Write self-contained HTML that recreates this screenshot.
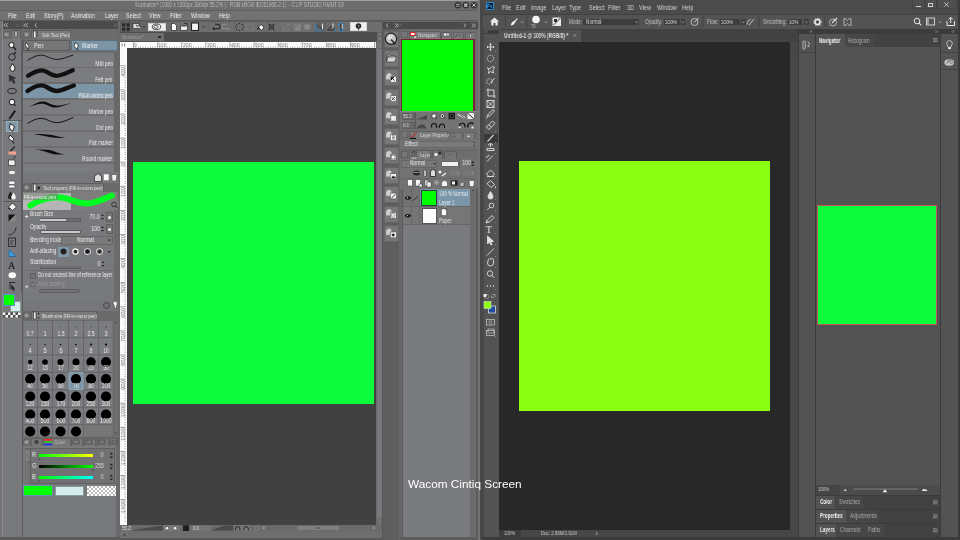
<!DOCTYPE html>
<html><head><meta charset="utf-8">
<style>
*{margin:0;padding:0;box-sizing:border-box}
html,body{width:960px;height:540px;overflow:hidden;background:#6a6a6a;font-family:"Liberation Sans",sans-serif}
.a{position:absolute}
.t{position:absolute;white-space:nowrap;line-height:1;transform-origin:0 50%;will-change:transform}
.n{transform:scaleX(.76)}
.r{transform-origin:100% 50%}
svg{position:absolute;overflow:visible}
#csp{position:absolute;left:0;top:0;width:480px;height:540px;background:#6b6b6b;overflow:hidden}
.cl{color:#e4e4e4;font-size:6px}
#ps{position:absolute;left:480px;top:0;width:480px;height:540px;background:#535353;overflow:hidden}
.pl{color:#d0d0d0;font-size:6px}
</style></head><body>
<div id="csp">
<div class="a" style="left:0;top:0;width:480px;height:1px;background:#a0a0a0"></div>
<div class="a" style="left:0;top:1px;width:480px;height:10px;background:#6d6d6d"></div>
<div class="t" style="left:134.8px;top:2.2px;font-size:6.9px;color:#bababa;transform:scaleX(.69)">Illustration* (1000 x 1000px 300dpi 55.2% ) : RGB:sRGB IEC61966-2.1)&nbsp; - CLIP STUDIO PAINT EX</div>
<svg style="position:absolute;left:0;top:0" width="480" height="12"><g fill="#262626" stroke="#5a5a5a" stroke-width=".6"><circle cx="457.9" cy="5.2" r="3.3"/><circle cx="465.8" cy="5.2" r="3.3"/><circle cx="474" cy="5.2" r="3.3"/></g>
<path d="M456 4.3h3.8M456 6.1h3.8" stroke="#d8d8d8" stroke-width=".8"/><rect x="464.3" y="3.6" width="3" height="3.2" fill="#ddd"/><rect x="465.3" y="4.8" width="1" height="1" fill="#222"/><path d="M472.3 3.5l3.4 3.4M475.7 3.5l-3.4 3.4" stroke="#e0e0e0" stroke-width="1"/></svg>
<div class="a" style="left:0;top:10px;width:480px;height:1px;background:#5e5e5e"></div>
<div class="a" style="left:0;top:11px;width:480px;height:10px;background:#727272"></div>
<div class="t cl n" style="left:8px;top:12px;font-size:7px;color:#f0f0f0;transform:scaleX(.76)">File</div>
<div class="t cl n" style="left:26px;top:12px;font-size:7px;color:#f0f0f0;transform:scaleX(.76)">Edit</div>
<div class="t cl n" style="left:43.5px;top:12px;font-size:7px;color:#f0f0f0;transform:scaleX(.76)">Story(P)</div>
<div class="t cl n" style="left:71px;top:12px;font-size:7px;color:#f0f0f0;transform:scaleX(.76)">Animation</div>
<div class="t cl n" style="left:105px;top:12px;font-size:7px;color:#f0f0f0;transform:scaleX(.76)">Layer</div>
<div class="t cl n" style="left:126px;top:12px;font-size:7px;color:#f0f0f0;transform:scaleX(.76)">Select</div>
<div class="t cl n" style="left:149px;top:12px;font-size:7px;color:#f0f0f0;transform:scaleX(.76)">View</div>
<div class="t cl n" style="left:170px;top:12px;font-size:7px;color:#f0f0f0;transform:scaleX(.76)">Filter</div>
<div class="t cl n" style="left:191px;top:12px;font-size:7px;color:#f0f0f0;transform:scaleX(.76)">Window</div>
<div class="t cl n" style="left:219px;top:12px;font-size:7px;color:#f0f0f0;transform:scaleX(.76)">Help</div>
<div class="a" style="left:0;top:20px;width:480px;height:1px;background:#5a5a5a"></div>
<div class="a" style="left:0px;top:21px;width:120px;height:519px;background:#6a6a6a;"></div>
<div class="a" style="left:0px;top:21px;width:2px;height:519px;background:#737373;"></div>
<div class="a" style="left:2px;top:21px;width:116px;height:8.3px;background:#4b4b4b;"></div>
<div class="a" style="left:22px;top:21px;width:0.8px;height:8.3px;background:#5a5a5a;"></div>
<svg style="left:0px;top:0px" width="120" height="40"><g fill="none" stroke="#c8c8c8" stroke-width="0.8"><path d="M5.8 23.2l-2 2 2 2M8 23.2l-2 2 2 2M25.8 23.2l-2 2 2 2M28 23.2l-2 2 2 2M36.5 23.2l-1.3 2 1.3 2"/></g><rect x="16" y="24" width="3" height="3" fill="#585858"/><rect x="114" y="23.5" width="3" height="3" fill="#5c5c5c"/></svg>
<div class="a" style="left:2px;top:29px;width:116px;height:10px;background:#6c6c6c;"></div>
<div class="a" style="left:3px;top:31px;width:7px;height:7px;background:#757575;border:1px solid #646464"></div>
<div class="a" style="left:11px;top:30px;width:10px;height:9px;background:#7a7a7a;border:1px solid #5e5e5e;border-bottom:none"></div>
<div class="a" style="left:23px;top:31px;width:7px;height:7px;background:#757575;border:1px solid #646464"></div>
<div class="a" style="left:31px;top:30px;width:40px;height:9px;background:#7a7a7a;border:1px solid #5e5e5e;border-bottom:none"></div>
<svg style="left:0px;top:0px" width="120" height="40"><g fill="#eee" stroke="#222" stroke-width="0.6"><rect x="15" y="31" width="2" height="6"/><rect x="33.5" y="31" width="2.5" height="7"/></g><g fill="#444"><rect x="37" y="31.5" width="1" height="1.5"/><rect x="37" y="34.5" width="1" height="1.5"/></g></svg>
<div class="t" style="left:42px;top:32.30px;font-size:6px;color:#e6e6e6;transform:scaleX(0.72);">Sub Tool [Pen]</div>
<div class="a" style="left:2px;top:39px;width:20px;height:498px;background:#78797c;"></div>
<div class="a" style="left:1.5px;top:21px;width:1px;height:516px;background:#8a8a8a;"></div>
<div class="a" style="left:3px;top:40px;width:19px;height:253px;background:#78797c;border-right:1px solid #5c5c5c"></div>
<div class="a" style="left:3px;top:120px;width:19px;height:1px;background:#5c5c5c;"></div>
<div class="a" style="left:3px;top:201px;width:19px;height:1px;background:#5c5c5c;"></div>
<div class="a" style="left:6px;top:121px;width:12px;height:11px;background:#7f97a6;border:1px solid #9ab0bd"></div>
<div class="a" style="left:22px;top:39px;width:1px;height:498px;background:#5c5c5c;"></div>
<svg style="left:0px;top:0px" width="24" height="300"><g stroke="#1a1a1a" stroke-width="1" fill="#f0f0f0">
<circle cx="11.5" cy="45" r="2.6"/><path d="M13.5 47l2.5 3" fill="none" stroke-width="1.3"/>
<circle cx="12" cy="57" r="3.3" fill="none" stroke="#2a2a2a"/><path d="M14 54l2-2" stroke-width="1.4"/>
<path d="M12.5 63.5c-1.5 2.5-2.5 4-2.5 5.3a2.5 2.5 0 0 0 5 0c0-1.3-1-2.8-2.5-5.3z"/>
<path d="M9 75l6.5 3-2.5 1 2 3.5-1.4.8-2-3.5-2 1.7z" fill="#333" stroke="#222" stroke-width=".6"/>
<ellipse cx="12" cy="91" rx="4.3" ry="2.5" fill="none" stroke="#2a2a2a"/>
<circle cx="12" cy="102" r="2.8"/><path d="M14 104l2 2" fill="none"/>
<path d="M14.5 110.5l-4.5 6.5-1 2.2 2-1.4 4.5-6.5z" fill="#222"/>
<path d="M10 123.5l4.5 3-2 5-3-3.5z" fill="#f5f5f5" stroke="#1a1a1a" stroke-width=".9"/>
<path d="M10 135l4 4-1.5 2.5-4-3z" fill="#f5f5f5" stroke="#1a1a1a" stroke-width=".9"/><path d="M12.5 141.5l1.5 2" stroke-width="1.2"/>
<path d="M15 146.5l-5 5" stroke="#222" stroke-width="1.2"/><rect x="8.5" y="151.5" width="7.5" height="3" fill="#f2a090" stroke="none"/>
<rect x="8.5" y="160" width="6.5" height="5.5" fill="#f0f0f0" stroke="#333" stroke-width=".7"/><path d="M13 159l3-3" stroke-width=".8"/>
<ellipse cx="12" cy="172.5" rx="3.5" ry="2.3" fill="#eee" stroke="#555" stroke-width=".7"/>
<rect x="8.5" y="181" width="6.5" height="3.5" rx="1.5" fill="#f4f4f4" stroke="#555" stroke-width=".7"/><rect x="8.5" y="185" width="6.5" height="3" rx="1.5" fill="#f4f4f4" stroke="#555" stroke-width=".7"/>
<path d="M10.5 191.5c-1.8 2.8-2.5 4.2-2.5 5.3a2.5 2.5 0 0 0 5 0c0-1.1-.7-2.5-2.5-5.3z" fill="#222" stroke="none"/><path d="M13.5 192.5c-1.5 2.5-2.3 3.8-2.3 4.8a2.3 2.3 0 0 0 4.6 0c0-1-.8-2.3-2.3-4.8z" fill="#f4f4f4" stroke="none"/>
<path d="M8.5 207l4-4 4 4-4 3.5z" fill="#f4f4f4" stroke="#222" stroke-width=".8"/><path d="M8 208l2 1" stroke-width="1.2"/>
<rect x="8.5" y="214.5" width="7" height="7" fill="#888" stroke="none"/><path d="M8.5 214.5h7l-7 7z" fill="#111" stroke="none"/>
<path d="M8.5 235c4 0 7-3 7.5-7.5" fill="none" stroke="#222" stroke-width=".9"/>
<rect x="8.5" y="238" width="7" height="8.5" fill="none" stroke="#2a2a2a" stroke-width=".9"/><path d="M10 241h4M10 243h2v2" fill="none" stroke="#2a2a2a" stroke-width=".7"/>
<path d="M9 249.5v7h7z" fill="#3aa0e0" stroke="#1f5f90" stroke-width=".7"/>
</g>
<text x="8" y="269" font-family="Liberation Serif" font-size="10" fill="#111">A</text>
<ellipse cx="12.3" cy="275.3" rx="3.8" ry="3" fill="#fafafa"/>
<path d="M9 282.5h6.5M10 283v6" stroke="#222" stroke-width=".9"/><path d="M11 284.5l4 4-1.3.3 1 2-1 .5-1-2-1 1z" fill="#222"/></svg>
<div class="a" style="left:10px;top:301px;width:10.5px;height:10.5px;background:#d3ecec;border:1px solid #8a9a9a"></div>
<div class="a" style="left:3px;top:294px;width:11.5px;height:11.5px;background:#00ff00;border:1px solid #5f8fbf"></div>
<svg style="left:0px;top:0px" width="30" height="330"><rect x="3.0" y="312.5" width="2.5" height="2.5" fill="#f4f4f4"/><rect x="3.0" y="315.0" width="2.5" height="2.5" fill="#505050"/><rect x="5.5" y="312.5" width="2.5" height="2.5" fill="#505050"/><rect x="5.5" y="315.0" width="2.5" height="2.5" fill="#f4f4f4"/><rect x="8.0" y="312.5" width="2.5" height="2.5" fill="#f4f4f4"/><rect x="8.0" y="315.0" width="2.5" height="2.5" fill="#505050"/><rect x="10.5" y="312.5" width="2.5" height="2.5" fill="#505050"/><rect x="10.5" y="315.0" width="2.5" height="2.5" fill="#f4f4f4"/><rect x="13.0" y="312.5" width="2.5" height="2.5" fill="#f4f4f4"/><rect x="13.0" y="315.0" width="2.5" height="2.5" fill="#505050"/><rect x="15.5" y="312.5" width="2.5" height="2.5" fill="#505050"/><rect x="15.5" y="315.0" width="2.5" height="2.5" fill="#f4f4f4"/><rect x="18.0" y="312.5" width="2.5" height="2.5" fill="#f4f4f4"/><rect x="18.0" y="315.0" width="2.5" height="2.5" fill="#505050"/></svg>
<div class="a" style="left:23px;top:39px;width:95px;height:144px;background:#6e6e6e;"></div>
<div class="a" style="left:23px;top:40px;width:47px;height:11px;background:#777777;border:1px solid #5c5c5c;border-radius:1px"></div>
<div class="a" style="left:71px;top:40px;width:47px;height:11px;background:#7b95a6;border:1px solid #5c6e7a;border-radius:1px"></div>
<svg style="left:0px;top:0px" width="120" height="60"><g stroke="#1a1a1a" stroke-width=".7" fill="#f2f2f2"><path d="M26 42l3 4.5-.8 2.8-2.8-4z"/><path d="M28 49.5l1.3 1.3" fill="none"/><path d="M75 42.5l3.5 2.5-1.5 4-3-2.5z"/><path d="M77 49l1 1.5" fill="none"/></g></svg>
<div class="t" style="left:34px;top:42.65px;font-size:6.5px;color:#e8e8e8;transform:scaleX(0.8);">Pen</div>
<div class="t" style="left:82px;top:42.65px;font-size:6.5px;color:#eef2f5;transform:scaleX(0.8);">Marker</div>
<div class="a" style="left:113px;top:52px;width:5px;height:120px;background:#686868;"></div>
<div class="a" style="left:23px;top:53px;width:90.5px;height:14px;background:#7b7c7f;"></div>
<div class="t r" style="right:367.50px;top:61.25px;font-size:6.5px;color:#ececec;transform:scaleX(0.73);">Milli pen</div>
<div class="a" style="left:23px;top:68px;width:90.5px;height:14px;background:#7b7c7f;"></div>
<div class="t r" style="right:367.50px;top:77.25px;font-size:6.5px;color:#ececec;transform:scaleX(0.73);">Felt pen</div>
<div class="a" style="left:23px;top:84px;width:90.5px;height:14px;background:#7c96a8;"></div>
<div class="a" style="left:79px;top:92.5px;width:33.5px;height:6px;background:rgba(200,200,200,.25);"></div>
<div class="t r" style="right:367.50px;top:92.65px;font-size:6.5px;color:#ececec;transform:scaleX(0.73);">Fill-in-mono pen</div>
<div class="a" style="left:23px;top:100px;width:90.5px;height:14px;background:#7b7c7f;"></div>
<div class="t r" style="right:367.50px;top:109.25px;font-size:6.5px;color:#ececec;transform:scaleX(0.73);">Marker pen</div>
<div class="a" style="left:23px;top:116px;width:90.5px;height:14px;background:#7b7c7f;"></div>
<div class="t r" style="right:367.50px;top:124.75px;font-size:6.5px;color:#ececec;transform:scaleX(0.73);">Dot pen</div>
<div class="a" style="left:23px;top:132px;width:90.5px;height:14px;background:#7b7c7f;"></div>
<div class="t r" style="right:367.50px;top:140.25px;font-size:6.5px;color:#ececec;transform:scaleX(0.73);">Flat marker</div>
<div class="a" style="left:23px;top:148px;width:90.5px;height:14px;background:#7b7c7f;"></div>
<div class="t r" style="right:367.50px;top:156.25px;font-size:6.5px;color:#ececec;transform:scaleX(0.73);">Round marker</div>
<div class="a" style="left:23px;top:164px;width:90.5px;height:8px;background:#7b7c7f;"></div>
<svg style="left:0px;top:0px" width="120" height="170"><g fill="none" stroke="#111" stroke-linecap="round">
<path d="M27.7 60.2C33 57 37 55 41.6 55.1S51 59.5 56.7 59.5 68 56.5 73 55.1" stroke-width=".9"/>
<path d="M28 75.8C33 72.5 37 70.5 41.6 70.3S51 75.8 56.7 75.8 68 72 72.8 70.2" stroke-width="4.2"/>
<path d="M27.5 91C32.5 87.5 37 85.5 41.6 85.4S51 91 56.7 91 68.5 87 73.8 85.5" stroke-width="4.4"/>

<path d="M27.7 123.3C33 120 37 118.3 41.6 118.3S51 122.7 56.7 122.7 68 119.5 73 117.6" stroke-width="1"/>
</g>
<defs><filter id="bl" x="-10%" y="-50%" width="120%" height="200%"><feGaussianBlur stdDeviation=".35"/></filter></defs>
<path filter="url(#bl)" d="M29.5 106.6C35 104 38 101.8 42.6 101.5S51 105.2 56.4 105.6 67 103.6 71.3 103.2C67 104 62 106.9 56.4 107.5S47 103.9 42.6 103.7 34 105.6 29.5 106.6Z" fill="#111"/>
<path filter="url(#bl)" d="M33.5 134.2C40 133.8 45 134.3 49.5 134.7S60 137.6 65.6 137.8C60 138.2 55 138 49.5 137.1S40 134.6 33.5 134.2Z" fill="#111"/>
<path filter="url(#bl)" d="M34.6 149.5C41 149.3 46 149.6 49.5 149.9S58 153.4 64.4 154.3C58 154.9 53 154.2 49.5 152.9S41 150.1 34.6 149.5Z" fill="#111"/></svg>
<div class="a" style="left:23px;top:172px;width:95px;height:11px;background:#76777a;"></div>
<svg style="left:0px;top:0px" width="120" height="190"><g stroke="#222" stroke-width=".7" fill="#eee">
<path d="M94.5 176.5l3.5-3 3.5 3v5h-7z" fill="#ddd"/><rect x="103.5" y="174" width="5.5" height="6.5" fill="#fafafa" stroke="#888"/><path d="M111.5 174.5h5.5l-.8 6.5h-4z" fill="#f0f0f0" stroke="#555"/>
</g></svg>
<div class="a" style="left:23px;top:183px;width:95px;height:9px;background:#6a6a6a;"></div>
<div class="a" style="left:23px;top:184px;width:7px;height:7px;background:#757575;border:1px solid #646464"></div>
<div class="a" style="left:31px;top:183px;width:72.5px;height:9px;background:#7a7a7a;border:1px solid #5e5e5e;border-bottom:none"></div>
<svg style="left:0px;top:0px" width="120" height="200"><rect x="33.5" y="184" width="2.5" height="7" fill="#eee" stroke="#222" stroke-width=".6"/><circle cx="38.7" cy="188" r="1.4" fill="#222"/></svg>
<div class="t" style="left:42.5px;top:185.30px;font-size:6px;color:#e6e6e6;transform:scaleX(0.72);">Tool property [Fill-in-mono pen]</div>
<div class="a" style="left:23px;top:192px;width:95px;height:18px;background:#7d7d7d;"></div>
<div class="a" style="left:23px;top:193px;width:48px;height:16.5px;background:#b5b5b5;"></div>
<svg style="left:0px;top:0px" width="120" height="215"><path d="M30.5 205.5C38 200 50 196.5 61 197.5C70 198.5 78 204 88 203.5C97 203 105 198.5 112 195.5" fill="none" stroke="#00ff21" stroke-width="6" stroke-linecap="round"/>
<circle cx="114" cy="204.5" r="2.3" fill="none" stroke="#222" stroke-width=".8"/><path d="M115.6 206.2l2 2" stroke="#222" stroke-width="1"/></svg>
<div class="a" style="left:23px;top:193px;width:34.5px;height:6.5px;background:rgba(120,130,120,.55);"></div>
<div class="t" style="left:23.5px;top:193.50px;font-size:6px;color:#f4f4f4;transform:scaleX(0.74);">Fill-in-mono pen</div>
<div class="a" style="left:23px;top:210px;width:95px;height:90px;background:#78797c;"></div>
<div class="a" style="left:113.5px;top:210px;width:4.5px;height:90px;background:#6b6b6b;"></div>
<svg style="left:0px;top:0px" width="120" height="300"><path d="M25 216.5h3.5M26.75 214.75v3.5" stroke="#eee" stroke-width=".8"/></svg>
<div class="t" style="left:29.5px;top:211.15px;font-size:6.5px;color:#ececec;transform:scaleX(0.74);">Brush Size</div>
<div class="a" style="left:39.5px;top:218px;width:41px;height:3.5px;background:#6e6e6e;border:1px solid #5a5a5a;border-radius:1px"></div>
<div class="a" style="left:40px;top:218.5px;width:26px;height:2.5px;background:#c8c8c8;"></div>
<div class="t r" style="right:380.50px;top:213.75px;font-size:6.5px;color:#ececec;transform:scaleX(0.8);">70.0</div>
<svg style="left:0px;top:0px" width="120" height="300"><g fill="#222"><path d="M101 216l1.5-1.8 1.5 1.8z"/><path d="M101 218l1.5 1.8 1.5-1.8z"/><path d="M101 228l1.5-1.8 1.5 1.8z"/><path d="M101 230l1.5 1.8 1.5-1.8z"/><path d="M101.5 263l1.5-1.8 1.5 1.8z"/><path d="M101.5 265l1.5 1.8 1.5-1.8z"/></g></svg>
<div class="a" style="left:106px;top:212px;width:6.5px;height:9.5px;background:#747474;border:1px solid #5f5f5f"></div>
<div class="a" style="left:107.8px;top:215.5px;width:3px;height:3px;background:#eee;border-radius:50%"></div>
<div class="t" style="left:29.5px;top:223.75px;font-size:6.5px;color:#ececec;transform:scaleX(0.74);">Opacity</div>
<div class="a" style="left:39.5px;top:230px;width:41px;height:3.5px;background:#c8c8c8;border:1px solid #5a5a5a;border-radius:1px"></div>
<div class="t r" style="right:380.00px;top:225.75px;font-size:6.5px;color:#ececec;transform:scaleX(0.8);">100</div>
<div class="a" style="left:106px;top:224px;width:6.5px;height:9.5px;background:#747474;border:1px solid #5f5f5f"></div>
<div class="a" style="left:107.8px;top:227.5px;width:3px;height:3px;background:#eee;border-radius:50%"></div>
<div class="t" style="left:29.5px;top:236.95px;font-size:6.5px;color:#ececec;transform:scaleX(0.74);">Blending mode</div>
<div class="a" style="left:61px;top:236px;width:51.5px;height:8.5px;background:#7a7a7a;border:1px solid #666"></div>
<div class="t" style="left:76.5px;top:236.95px;font-size:6.5px;color:#ececec;transform:scaleX(0.8);">Normal</div>
<svg style="left:0px;top:0px" width="120" height="300"><path d="M107.8 239.5h3l-1.5 1.8z" fill="#222"/><path d="M107.8 251h3l-1.5 1.8z" fill="#222"/></svg>
<div class="t" style="left:29.5px;top:248.25px;font-size:6.5px;color:#ececec;transform:scaleX(0.74);">Anti-aliasing</div>
<div class="a" style="left:57.5px;top:247px;width:11.5px;height:9.5px;background:#7f98a9;"></div>
<svg style="left:0px;top:0px" width="120" height="300"><circle cx="63.5" cy="251.6" r="3" fill="#222"/>
<circle cx="75.5" cy="251.6" r="3.3" fill="#eee"/><circle cx="75.5" cy="251.6" r="1.9" fill="#222"/>
<circle cx="87.5" cy="251.6" r="3.3" fill="#eee"/><circle cx="87.5" cy="251.6" r="2.5" fill="#333"/><circle cx="87.5" cy="251.6" r="1.4" fill="#111"/>
<circle cx="99.5" cy="251.6" r="3.3" fill="#eee"/><circle cx="99.5" cy="251.6" r="2.5" fill="#555"/><circle cx="99.5" cy="251.6" r="1.2" fill="#111"/></svg>
<div class="t" style="left:29.5px;top:258.55px;font-size:6.5px;color:#ececec;transform:scaleX(0.74);">Stabilization</div>
<div class="a" style="left:39.5px;top:265.5px;width:41px;height:3px;background:#6e6e6e;border:1px solid #5a5a5a;border-top:none;border-radius:1px"></div>
<div class="t r" style="right:379.50px;top:260.75px;font-size:6.5px;color:#ececec;transform:scaleX(0.8);">0</div>
<div class="a" style="left:26px;top:270px;width:88px;height:1px;background:#6c6c6c;"></div>
<div class="a" style="left:30px;top:273px;width:5.5px;height:5.5px;background:#727272;border:1px solid #5e5e5e"></div>
<div class="t" style="left:37.5px;top:271.95px;font-size:6.5px;color:#ececec;transform:scaleX(0.7);">Do not exceed line of reference layer</div>
<div class="a" style="left:30px;top:282px;width:5px;height:5px;background:#757575;border:1px solid #666"></div>
<div class="t" style="left:37.5px;top:281.25px;font-size:6.5px;color:#9a9a9a;transform:scaleX(0.74);">Area scaling</div>
<svg style="left:0px;top:0px" width="120" height="300"><path d="M31 284.5l1.3 1.5 2.5-3" fill="none" stroke="#9a9a9a" stroke-width=".7"/><path d="M25 286.8h3.5M26.75 285v3.5" stroke="#ddd" stroke-width=".8"/></svg>
<div class="a" style="left:39px;top:288.5px;width:41px;height:4px;background:#737373;border:1px solid #5e5e5e;border-radius:2px"></div>
<div class="a" style="left:23px;top:300px;width:95px;height:11px;background:#76777a;"></div>
<svg style="left:0px;top:0px" width="120" height="320"><circle cx="106.5" cy="305.5" r="2.8" fill="none" stroke="#333" stroke-width="1.2" stroke-dasharray="1 .8"/><path d="M113 302c2-1.5 4-.5 4.5 1.5l-1 3v2h-2v-2l-1.5-3z" fill="#eee" stroke="#333" stroke-width=".6"/></svg>
<div class="a" style="left:23px;top:311px;width:95px;height:9px;background:#6a6a6a;"></div>
<div class="a" style="left:23px;top:312px;width:7px;height:7px;background:#757575;border:1px solid #646464"></div>
<div class="a" style="left:31px;top:311px;width:65.5px;height:9px;background:#7a7a7a;border:1px solid #5e5e5e;border-bottom:none"></div>
<svg style="left:0px;top:0px" width="120" height="330"><rect x="33.5" y="312" width="2.5" height="7" fill="#eee" stroke="#222" stroke-width=".6"/><circle cx="38.7" cy="313.5" r=".8" fill="#222"/><circle cx="38.7" cy="318" r=".8" fill="#222"/></svg>
<div class="t" style="left:42px;top:312.60px;font-size:6px;color:#e6e6e6;transform:scaleX(0.72);">Brush size [Fill-in-mono pen]</div>
<div class="a" style="left:23px;top:320px;width:95px;height:117px;background:#666666;"></div>
<div class="a" style="left:114px;top:320px;width:4px;height:117px;background:#6e6e6e;"></div>
<svg style="left:0px;top:0px" width="120" height="440"><path d="M114.8 323l1.2-1.5 1.2 1.5z" fill="#444"/><path d="M114.8 432.5l1.2 1.5 1.2-1.5z" fill="#444"/></svg>
<svg style="left:0px;top:0px" width="120" height="440"><rect x="23.5" y="320.8" width="13.5" height="16.3" fill="#7b7c7f"/><circle cx="30.2" cy="327.0" r="0.25" fill="#000"/><rect x="38.0" y="320.8" width="14.0" height="16.3" fill="#7b7c7f"/><circle cx="45.0" cy="327.0" r="0.30" fill="#000"/><rect x="53.0" y="320.8" width="15.0" height="16.3" fill="#7b7c7f"/><circle cx="60.5" cy="327.0" r="0.35" fill="#000"/><rect x="69.0" y="320.8" width="14.0" height="16.3" fill="#7b7c7f"/><circle cx="76.0" cy="327.0" r="0.40" fill="#000"/><rect x="84.0" y="320.8" width="14.1" height="16.3" fill="#7b7c7f"/><circle cx="91.0" cy="327.0" r="0.45" fill="#000"/><rect x="99.1" y="320.8" width="13.8" height="16.3" fill="#7b7c7f"/><circle cx="106.0" cy="327.0" r="0.50" fill="#000"/><rect x="23.5" y="338.1" width="13.5" height="16.4" fill="#7b7c7f"/><circle cx="30.2" cy="344.5" r="0.50" fill="#000"/><rect x="38.0" y="338.1" width="14.0" height="16.4" fill="#7b7c7f"/><circle cx="45.0" cy="344.5" r="0.65" fill="#000"/><rect x="53.0" y="338.1" width="15.0" height="16.4" fill="#7b7c7f"/><circle cx="60.5" cy="344.5" r="0.75" fill="#000"/><rect x="69.0" y="338.1" width="14.0" height="16.4" fill="#7b7c7f"/><circle cx="76.0" cy="344.5" r="0.85" fill="#000"/><rect x="84.0" y="338.1" width="14.1" height="16.4" fill="#7b7c7f"/><circle cx="91.0" cy="344.5" r="0.95" fill="#000"/><rect x="99.1" y="338.1" width="13.8" height="16.4" fill="#7b7c7f"/><circle cx="106.0" cy="344.5" r="1.10" fill="#000"/><rect x="23.5" y="355.5" width="13.5" height="16.4" fill="#7b7c7f"/><circle cx="30.2" cy="362.0" r="2.15" fill="#000"/><rect x="38.0" y="355.5" width="14.0" height="16.4" fill="#7b7c7f"/><circle cx="45.0" cy="362.0" r="2.80" fill="#000"/><rect x="53.0" y="355.5" width="15.0" height="16.4" fill="#7b7c7f"/><circle cx="60.5" cy="362.0" r="3.10" fill="#000"/><rect x="69.0" y="355.5" width="14.0" height="16.4" fill="#7b7c7f"/><circle cx="76.0" cy="362.0" r="3.60" fill="#000"/><rect x="84.0" y="355.5" width="14.1" height="16.4" fill="#7b7c7f"/><circle cx="91.0" cy="362.0" r="4.75" fill="#000"/><rect x="99.1" y="355.5" width="13.8" height="16.4" fill="#7b7c7f"/><circle cx="106.0" cy="362.0" r="5.00" fill="#000"/><rect x="23.5" y="372.9" width="13.5" height="16.4" fill="#7b7c7f"/><circle cx="30.2" cy="379.0" r="5.10" fill="#000"/><rect x="38.0" y="372.9" width="14.0" height="16.4" fill="#7b7c7f"/><circle cx="45.0" cy="379.0" r="5.10" fill="#000"/><rect x="53.0" y="372.9" width="15.0" height="16.4" fill="#7b7c7f"/><circle cx="60.5" cy="379.0" r="5.10" fill="#000"/><rect x="69.0" y="372.9" width="14.0" height="16.4" fill="#7e97a8"/><circle cx="76.0" cy="379.0" r="5.10" fill="#000"/><rect x="84.0" y="372.9" width="14.1" height="16.4" fill="#7b7c7f"/><circle cx="91.0" cy="379.0" r="5.10" fill="#000"/><rect x="99.1" y="372.9" width="13.8" height="16.4" fill="#7b7c7f"/><circle cx="106.0" cy="379.0" r="5.10" fill="#000"/><rect x="23.5" y="390.3" width="13.5" height="16.4" fill="#7b7c7f"/><circle cx="30.2" cy="396.5" r="5.10" fill="#000"/><rect x="38.0" y="390.3" width="14.0" height="16.4" fill="#7b7c7f"/><circle cx="45.0" cy="396.5" r="5.10" fill="#000"/><rect x="53.0" y="390.3" width="15.0" height="16.4" fill="#7b7c7f"/><circle cx="60.5" cy="396.5" r="5.10" fill="#000"/><rect x="69.0" y="390.3" width="14.0" height="16.4" fill="#7b7c7f"/><circle cx="76.0" cy="396.5" r="5.10" fill="#000"/><rect x="84.0" y="390.3" width="14.1" height="16.4" fill="#7b7c7f"/><circle cx="91.0" cy="396.5" r="5.10" fill="#000"/><rect x="99.1" y="390.3" width="13.8" height="16.4" fill="#7b7c7f"/><circle cx="106.0" cy="396.5" r="5.10" fill="#000"/><rect x="23.5" y="407.7" width="13.5" height="16.4" fill="#7b7c7f"/><circle cx="30.2" cy="414.5" r="5.10" fill="#000"/><rect x="38.0" y="407.7" width="14.0" height="16.4" fill="#7b7c7f"/><circle cx="45.0" cy="414.5" r="5.10" fill="#000"/><rect x="53.0" y="407.7" width="15.0" height="16.4" fill="#7b7c7f"/><circle cx="60.5" cy="414.5" r="5.10" fill="#000"/><rect x="69.0" y="407.7" width="14.0" height="16.4" fill="#7b7c7f"/><circle cx="76.0" cy="414.5" r="5.10" fill="#000"/><rect x="84.0" y="407.7" width="14.1" height="16.4" fill="#7b7c7f"/><circle cx="91.0" cy="414.5" r="5.10" fill="#000"/><rect x="99.1" y="407.7" width="13.8" height="16.4" fill="#7b7c7f"/><circle cx="106.0" cy="414.5" r="5.10" fill="#000"/><rect x="23.5" y="425.1" width="13.5" height="11.4" fill="#7b7c7f"/><circle cx="30.2" cy="431.5" r="5.10" fill="#000"/><rect x="38.0" y="425.1" width="14.0" height="11.4" fill="#7b7c7f"/><circle cx="45.0" cy="431.5" r="5.10" fill="#000"/><rect x="53.0" y="425.1" width="15.0" height="11.4" fill="#7b7c7f"/><circle cx="60.5" cy="431.5" r="5.10" fill="#000"/><rect x="69.0" y="425.1" width="14.0" height="11.4" fill="#7b7c7f"/><circle cx="76.0" cy="431.5" r="5.10" fill="#000"/><rect x="83.9" y="425.1" width="29" height="11.4" fill="#777"/><rect x="68.9" y="372.8" width="14.2" height="16.6" fill="none" stroke="#9cb3c2" stroke-width=".8"/></svg>
<div class="t" style="left:0.25px;width:60px;text-align:center;top:330.75px;font-size:6.5px;color:#ededed;transform:scaleX(0.8);transform-origin:50% 50%;">0.7</div>
<div class="t" style="left:15.00px;width:60px;text-align:center;top:330.75px;font-size:6.5px;color:#ededed;transform:scaleX(0.8);transform-origin:50% 50%;">1</div>
<div class="t" style="left:30.50px;width:60px;text-align:center;top:330.75px;font-size:6.5px;color:#ededed;transform:scaleX(0.8);transform-origin:50% 50%;">1.5</div>
<div class="t" style="left:46.00px;width:60px;text-align:center;top:330.75px;font-size:6.5px;color:#ededed;transform:scaleX(0.8);transform-origin:50% 50%;">2</div>
<div class="t" style="left:61.05px;width:60px;text-align:center;top:330.75px;font-size:6.5px;color:#ededed;transform:scaleX(0.8);transform-origin:50% 50%;">2.5</div>
<div class="t" style="left:76.00px;width:60px;text-align:center;top:330.75px;font-size:6.5px;color:#ededed;transform:scaleX(0.8);transform-origin:50% 50%;">3</div>
<div class="t" style="left:0.25px;width:60px;text-align:center;top:348.15px;font-size:6.5px;color:#ededed;transform:scaleX(0.8);transform-origin:50% 50%;">4</div>
<div class="t" style="left:15.00px;width:60px;text-align:center;top:348.15px;font-size:6.5px;color:#ededed;transform:scaleX(0.8);transform-origin:50% 50%;">5</div>
<div class="t" style="left:30.50px;width:60px;text-align:center;top:348.15px;font-size:6.5px;color:#ededed;transform:scaleX(0.8);transform-origin:50% 50%;">6</div>
<div class="t" style="left:46.00px;width:60px;text-align:center;top:348.15px;font-size:6.5px;color:#ededed;transform:scaleX(0.8);transform-origin:50% 50%;">7</div>
<div class="t" style="left:61.05px;width:60px;text-align:center;top:348.15px;font-size:6.5px;color:#ededed;transform:scaleX(0.8);transform-origin:50% 50%;">8</div>
<div class="t" style="left:76.00px;width:60px;text-align:center;top:348.15px;font-size:6.5px;color:#ededed;transform:scaleX(0.8);transform-origin:50% 50%;">10</div>
<div class="t" style="left:0.25px;width:60px;text-align:center;top:365.25px;font-size:6.5px;color:#ededed;transform:scaleX(0.8);transform-origin:50% 50%;">12</div>
<div class="t" style="left:15.00px;width:60px;text-align:center;top:365.25px;font-size:6.5px;color:#ededed;transform:scaleX(0.8);transform-origin:50% 50%;">15</div>
<div class="t" style="left:30.50px;width:60px;text-align:center;top:365.25px;font-size:6.5px;color:#ededed;transform:scaleX(0.8);transform-origin:50% 50%;">17</div>
<div class="t" style="left:46.00px;width:60px;text-align:center;top:365.25px;font-size:6.5px;color:#ededed;transform:scaleX(0.8);transform-origin:50% 50%;">20</div>
<div class="t" style="left:61.05px;width:60px;text-align:center;top:365.25px;font-size:6.5px;color:#ededed;transform:scaleX(0.8);transform-origin:50% 50%;">25</div>
<div class="t" style="left:76.00px;width:60px;text-align:center;top:365.25px;font-size:6.5px;color:#ededed;transform:scaleX(0.8);transform-origin:50% 50%;">30</div>
<div class="t" style="left:0.25px;width:60px;text-align:center;top:382.75px;font-size:6.5px;color:#ededed;transform:scaleX(0.8);transform-origin:50% 50%;">40</div>
<div class="t" style="left:15.00px;width:60px;text-align:center;top:382.75px;font-size:6.5px;color:#ededed;transform:scaleX(0.8);transform-origin:50% 50%;">50</div>
<div class="t" style="left:30.50px;width:60px;text-align:center;top:382.75px;font-size:6.5px;color:#ededed;transform:scaleX(0.8);transform-origin:50% 50%;">60</div>
<div class="t" style="left:46.00px;width:60px;text-align:center;top:382.75px;font-size:6.5px;color:#ededed;transform:scaleX(0.8);transform-origin:50% 50%;">70</div>
<div class="t" style="left:61.05px;width:60px;text-align:center;top:382.75px;font-size:6.5px;color:#ededed;transform:scaleX(0.8);transform-origin:50% 50%;">80</div>
<div class="t" style="left:76.00px;width:60px;text-align:center;top:382.75px;font-size:6.5px;color:#ededed;transform:scaleX(0.8);transform-origin:50% 50%;">100</div>
<div class="t" style="left:0.25px;width:60px;text-align:center;top:400.55px;font-size:6.5px;color:#ededed;transform:scaleX(0.8);transform-origin:50% 50%;">120</div>
<div class="t" style="left:15.00px;width:60px;text-align:center;top:400.55px;font-size:6.5px;color:#ededed;transform:scaleX(0.8);transform-origin:50% 50%;">150</div>
<div class="t" style="left:30.50px;width:60px;text-align:center;top:400.55px;font-size:6.5px;color:#ededed;transform:scaleX(0.8);transform-origin:50% 50%;">170</div>
<div class="t" style="left:46.00px;width:60px;text-align:center;top:400.55px;font-size:6.5px;color:#ededed;transform:scaleX(0.8);transform-origin:50% 50%;">200</div>
<div class="t" style="left:61.05px;width:60px;text-align:center;top:400.55px;font-size:6.5px;color:#ededed;transform:scaleX(0.8);transform-origin:50% 50%;">250</div>
<div class="t" style="left:76.00px;width:60px;text-align:center;top:400.55px;font-size:6.5px;color:#ededed;transform:scaleX(0.8);transform-origin:50% 50%;">300</div>
<div class="t" style="left:0.25px;width:60px;text-align:center;top:417.75px;font-size:6.5px;color:#ededed;transform:scaleX(0.8);transform-origin:50% 50%;">400</div>
<div class="t" style="left:15.00px;width:60px;text-align:center;top:417.75px;font-size:6.5px;color:#ededed;transform:scaleX(0.8);transform-origin:50% 50%;">500</div>
<div class="t" style="left:30.50px;width:60px;text-align:center;top:417.75px;font-size:6.5px;color:#ededed;transform:scaleX(0.8);transform-origin:50% 50%;">600</div>
<div class="t" style="left:46.00px;width:60px;text-align:center;top:417.75px;font-size:6.5px;color:#ededed;transform:scaleX(0.8);transform-origin:50% 50%;">700</div>
<div class="t" style="left:61.05px;width:60px;text-align:center;top:417.75px;font-size:6.5px;color:#ededed;transform:scaleX(0.8);transform-origin:50% 50%;">800</div>
<div class="t" style="left:76.00px;width:60px;text-align:center;top:417.75px;font-size:6.5px;color:#ededed;transform:scaleX(0.8);transform-origin:50% 50%;">1000</div>
<div class="a" style="left:23px;top:437px;width:95px;height:9px;background:#6a6a6a;"></div>
<div class="a" style="left:23px;top:438.5px;width:7px;height:7px;background:#757575;border:1px solid #646464"></div>
<div class="a" style="left:31px;top:438px;width:11px;height:8px;background:#787878;border:1px solid #606060;border-bottom:none"></div>
<div class="a" style="left:43px;top:438px;width:27.5px;height:8px;background:#787878;border:1px solid #606060;border-bottom:none"></div>
<div class="a" style="left:71px;top:438px;width:11.5px;height:8px;background:#787878;border:1px solid #606060;border-bottom:none"></div>
<div class="a" style="left:84px;top:438px;width:12px;height:8px;background:#787878;border:1px solid #606060;border-bottom:none"></div>
<div class="a" style="left:97px;top:438px;width:12px;height:8px;background:#787878;border:1px solid #606060;border-bottom:none"></div>
<div class="a" style="left:110px;top:438px;width:8px;height:8px;background:#787878;border:1px solid #606060;border-bottom:none"></div>
<svg style="left:0px;top:0px" width="120" height="450"><rect x="44" y="439" width="8" height="1.6" fill="#ff2020"/><rect x="44" y="441.3" width="8" height="1.6" fill="#20d020"/><rect x="44" y="443.6" width="8" height="1.6" fill="#2020ff"/>
<circle cx="36.5" cy="442" r="2.2" fill="#444"/><rect x="73" y="440" width="6" height="4" fill="none" stroke="#444" stroke-width=".7"/><rect x="86" y="440" width="6" height="4" fill="none" stroke="#444" stroke-width=".7"/><rect x="99" y="440" width="6" height="4" fill="none" stroke="#444" stroke-width=".7"/><rect x="112" y="441" width="5" height="3" fill="none" stroke="#444" stroke-width=".7"/></svg>
<div class="t" style="left:54px;top:439.00px;font-size:6px;color:#bcbcbc;transform:scaleX(0.78);">Color</div>
<div class="a" style="left:23px;top:446px;width:95px;height:91px;background:#78797c;"></div>
<div class="a" style="left:116px;top:446px;width:2px;height:91px;background:#6a6a6a;"></div>
<div class="a" style="left:24.5px;top:448px;width:90px;height:36px;background:#727274;border:1px solid #606060"></div>
<div class="a" style="left:25px;top:449px;width:6px;height:35px;background:#6c6c6c;border-right:1px solid #5f5f5f"></div>
<div class="t" style="left:21px;top:453px;font-size:5px;color:#9a9a9a;transform:rotate(-90deg);transform-origin:50% 50%;width:14px;text-align:center">RGB</div>
<div class="t" style="left:21px;top:466px;font-size:5px;color:#8a8a8a;transform:rotate(-90deg);transform-origin:50% 50%;width:14px;text-align:center">HSV</div>
<div class="t" style="left:21px;top:477px;font-size:5px;color:#8a8a8a;transform:rotate(-90deg);transform-origin:50% 50%;width:14px;text-align:center">CMY</div>
<div class="t" style="left:32px;top:452.10px;font-size:6.8px;color:#e8e8e8;transform:scaleX(0.85);">R</div>
<div class="t" style="left:32px;top:462.90px;font-size:6.8px;color:#e8e8e8;transform:scaleX(0.85);">G</div>
<div class="t" style="left:32px;top:473.90px;font-size:6.8px;color:#e8e8e8;transform:scaleX(0.85);">B</div>
<div class="a" style="left:39px;top:453.6px;width:53.5px;height:3.5px;background:linear-gradient(90deg,#00ff00,#ffff00);"></div>
<div class="a" style="left:39px;top:464.6px;width:53.5px;height:3.5px;background:linear-gradient(90deg,#000,#00ff00);"></div>
<div class="a" style="left:39px;top:475.6px;width:53.5px;height:3.5px;background:linear-gradient(90deg,#00ff00,#00ffff);"></div>
<div class="t r" style="right:376.50px;top:452.25px;font-size:6.5px;color:#d8d8d8;transform:scaleX(0.8);">0</div>
<div class="t r" style="right:376.50px;top:463.05px;font-size:6.5px;color:#d8d8d8;transform:scaleX(0.8);">255</div>
<div class="t r" style="right:376.50px;top:474.05px;font-size:6.5px;color:#d8d8d8;transform:scaleX(0.8);">0</div>
<svg style="left:0px;top:0px" width="120" height="490"><g fill="#222"><path d="M109.5 454.5l1.8-2 1.8 2z"/><path d="M109.5 456.5l1.8 2 1.8-2z"/><path d="M109.5 465.5l1.8-2 1.8 2z"/><path d="M109.5 467.5l1.8 2 1.8-2z"/><path d="M109.5 476.5l1.8-2 1.8 2z"/><path d="M109.5 478.5l1.8 2 1.8-2z"/></g>
<g fill="#555"><path d="M37.5 460l1.7-2 1.7 2z"/><path d="M91 471l1.7-2 1.7 2z"/><path d="M37.5 482l1.7-2 1.7 2z"/></g></svg>
<div class="a" style="left:23.3px;top:485.3px;width:29.3px;height:11px;background:#00ff00;border:1.5px solid #6a8fb0"></div>
<div class="a" style="left:54.8px;top:485.6px;width:29.6px;height:10.4px;background:#d3ecec;border:1px solid #8c9a9a"></div>
<div class="a" style="left:87px;top:485.8px;width:28.5px;height:10px;background-color:#fff;background-image:linear-gradient(45deg,#bbb 25%,transparent 25%,transparent 75%,#bbb 75%),linear-gradient(45deg,#bbb 25%,transparent 25%,transparent 75%,#bbb 75%);background-size:4px 4px;background-position:0 0,2px 2px"></div>
<div class="a" style="left:0px;top:537px;width:120px;height:3px;background:#5c5c5c;"></div>
<svg style="left:0px;top:0px" width="40" height="450"><path d="M8 32.8v3.5M4.8 34.5l2-1.3v2.6zM28 32.8v3.5M24.8 34.5l2-1.3v2.6zM28 185.8v3.5M24.8 187.5l2-1.3v2.6zM28 313.8v3.5M24.8 315.5l2-1.3v2.6zM28 440.3v3.5M24.8 442l2-1.3v2.6z" stroke="#b0b0b0" stroke-width=".6" fill="#b0b0b0"/></svg>
<div class="a" style="left:120px;top:21px;width:262px;height:11px;background:#6e6e6e;"></div>
<div class="a" style="left:120px;top:21px;width:262px;height:1px;background:#5e5e5e;"></div>
<div class="a" style="left:120px;top:22px;width:12px;height:10px;background:#666666;border:1px solid #5a5a5a"></div>
<svg style="left:0px;top:0px" width="480" height="40"><g fill="#2a2a2a"><rect x="122" y="23.3" width="3.3" height="3.3"/><rect x="126.5" y="23.3" width="3.3" height="3.3"/><rect x="122" y="27.5" width="3.3" height="3.3"/><rect x="126.5" y="27.5" width="3.3" height="3.3"/></g></svg>
<div class="a" style="left:132px;top:22px;width:15px;height:10px;background:#646464;"></div>
<svg style="left:0px;top:0px" width="480" height="40"><rect x="133" y="23.5" width="6" height="5" fill="#ddd" stroke="#333" stroke-width=".7"/><path d="M136 25l3 4 2-2z" fill="#fff" stroke="#222" stroke-width=".6"/><path d="M142.5 26.3h3l-1.5 1.8z" fill="#333"/></svg>
<div class="a" style="left:147.5px;top:22.5px;width:18px;height:8.5px;background:#f2f2f2;border:1px solid #cfcfcf"></div>
<svg style="left:0px;top:0px" width="480" height="40"><ellipse cx="156.5" cy="26.8" rx="4.3" ry="2.8" fill="none" stroke="#333" stroke-width=".9"/><ellipse cx="156" cy="26.8" rx="2.2" ry="1.5" fill="none" stroke="#333" stroke-width=".8"/></svg>
<svg style="left:0px;top:0px" width="480" height="40"><g stroke="#222" stroke-width=".7">
<path d="M171.5 23.5h3l2 2v5h-5z" fill="#fafafa"/>
<path d="M180.5 26h7.5l-1 4.5h-6.5z" fill="#eaeaea"/><path d="M184 23.5h3.5v2" fill="none"/>
<rect x="191.5" y="23" width="7" height="7.5" fill="#f2f2f2" stroke="#222" stroke-width="1.1"/>
</g>
<path d="M202 26.3h3l-1.5 1.8z" fill="#333"/>
<path d="M215 24.2h2.8a2.3 2.3 0 0 1 0 4.6h-5" fill="none" stroke="#222" stroke-width="1.1"/><path d="M214.3 27l-2.2 1.8 2.2 1.8z" fill="#222"/><path d="M169 22.5v9M209 22.5v9M233.5 22.5v9M278.5 22.5v9M312.5 22.5v9M347.5 22.5v9" stroke="#646464" stroke-width=".6"/>
<path d="M227 24.2h-2.8a2.3 2.3 0 0 0 0 4.6h5" fill="none" stroke="#8c8c8c" stroke-width="1.1"/><path d="M227.7 27l2.2 1.8-2.2 1.8z" fill="#8c8c8c"/>
<g fill="#2a2a2a"><circle cx="239.5" cy="23.5" r=".7"/><circle cx="242.3" cy="24.5" r=".7"/><circle cx="243.3" cy="27" r=".7"/><circle cx="242.3" cy="29.5" r=".7"/><circle cx="239.5" cy="30.5" r=".7"/><circle cx="236.7" cy="29.5" r=".7"/><circle cx="235.7" cy="27" r=".7"/><circle cx="236.7" cy="24.5" r=".7"/></g>
<rect x="246" y="24" width="7" height="6" fill="none" stroke="#9a9a9a" stroke-width=".6" stroke-dasharray="1 1"/>
<path d="M258 28l3-3.5 3 2.5-2 3.5z" fill="#fafafa" stroke="#222" stroke-width=".8"/><path d="M257 29l3-1" stroke="#222" stroke-width="1.2"/>
<path d="M268 23.5l7 7M275 23.5l-7 7" stroke="#222" stroke-width=".8"/><rect x="269.5" y="25" width="4" height="4" fill="none" stroke="#222" stroke-width=".7"/>
<path d="M283 30l6-6" stroke="#8a8a8a" stroke-width=".7"/><rect x="282.5" y="23.5" width="7" height="7" fill="none" stroke="#7e7e7e" stroke-width=".5"/>
<rect x="293.5" y="23.5" width="7" height="7" fill="#7a7a7a"/><path d="M293.5 30.5l7-7v7z" fill="#868686"/>
<rect x="304.5" y="24.5" width="5.5" height="5" fill="#8a8a8a" stroke="#7a7a7a" stroke-width=".5"/>
</svg>
<div class="a" style="left:314.5px;top:22px;width:11px;height:10px;background:#636363;"></div>
<div class="a" style="left:326px;top:22px;width:11px;height:10px;background:#6a6a6a;"></div>
<svg style="left:0px;top:0px" width="480" height="40"><path d="M316 24v6.5h7" fill="none" stroke="#2a7fc0" stroke-width="1.2"/><path d="M317 25l5 4" stroke="#222" stroke-width=".8"/><path d="M322.5 23.5v5.5" stroke="#eee" stroke-width="1"/>
<path d="M327.5 30h7.5l-2-4-3 1.5z" fill="none" stroke="#222" stroke-width=".9"/><path d="M333 23.5v4.5" stroke="#eee" stroke-width="1"/><circle cx="335" cy="30" r="1" fill="#2a8ad0"/>
<path d="M338.5 25.5l2.5-2.5 2.5 2.5M338.5 28.5l2.5 2.5 2.5-2.5" fill="none" stroke="#2a8ad0" stroke-width="1.3"/><path d="M341 23.5v7" stroke="#222" stroke-width="1.2"/><path d="M342.2 24v5" stroke="#eee" stroke-width=".8"/></svg>
<div class="a" style="left:349.8px;top:22px;width:17.2px;height:8.6px;background:#f0f0f0;border:1px solid #d5d5d5"></div>
<svg style="left:0px;top:0px" width="480" height="40"><circle cx="358.5" cy="26" r="2.8" fill="#2a2a2a"/><path d="M357.5 28.5l1 2 1-2z" fill="#2a2a2a"/><text x="357.3" y="27.8" font-size="4" fill="#ddd" font-family="Liberation Sans">?</text></svg>
<div class="a" style="left:120px;top:32px;width:262px;height:10px;background:#4d4d4d;"></div>
<div class="a" style="left:120px;top:32.5px;width:43.5px;height:8.5px;background:#6e6e6e;"></div>
<div class="t" style="left:122px;top:33.80px;font-size:6px;color:#9c9c9c;transform:scaleX(0.74);">Illustration*</div>
<div class="a" style="left:158px;top:36px;width:2.5px;height:2px;background:#2a2a2a;"></div>
<div class="a" style="left:376.5px;top:32px;width:5.5px;height:493px;background:#77787b;"></div>
<div class="a" style="left:376.5px;top:32px;width:5.5px;height:9px;background:#777777;border:1px solid #666"></div>
<svg style="left:0px;top:0px" width="480" height="540"><path d="M378.3 35.8h2l-1 1.3z" fill="#333"/><rect x="378.5" y="44" width="1.5" height="1.5" fill="#444"/><path d="M378.3 521h2l-1 1.3z" fill="#333"/></svg>
<div class="a" style="left:376.5px;top:42px;width:5.5px;height:6.5px;background:#747474;border:1px solid #666"></div>
<div class="a" style="left:376.5px;top:517.5px;width:5.5px;height:7px;background:#747474;border:1px solid #666"></div>
<div class="a" style="left:120px;top:42px;width:256.2px;height:6px;background:#fbfbfb;"></div>
<div class="a" style="left:120px;top:42px;width:6.5px;height:482.8px;background:#fbfbfb;"></div>
<div class="a" style="left:120px;top:42px;width:6.5px;height:6px;background:#fbfbfb;"></div>
<svg style="left:0px;top:0px" width="480" height="60"><rect x="121.5" y="43.5" width="1.2" height="3" fill="#999"/><rect x="124" y="43.5" width="1.2" height="3" fill="#999"/></svg>
<svg style="left:0px;top:0px" width="480" height="540"><rect x="133.10" y="42.3" width=".9" height="5.5" fill="#9a9a9a"/><rect x="135.51" y="46.6" width=".6" height="1.2" fill="#777"/><rect x="137.92" y="46.6" width=".6" height="1.2" fill="#777"/><rect x="140.33" y="46.6" width=".6" height="1.2" fill="#777"/><rect x="142.74" y="46.6" width=".6" height="1.2" fill="#777"/><rect x="145.15" y="46.6" width=".6" height="1.2" fill="#777"/><rect x="147.56" y="46.6" width=".6" height="1.2" fill="#777"/><rect x="149.97" y="46.6" width=".6" height="1.2" fill="#777"/><rect x="152.38" y="46.6" width=".6" height="1.2" fill="#777"/><rect x="154.79" y="46.6" width=".6" height="1.2" fill="#777"/><rect x="157.20" y="42.3" width=".9" height="5.5" fill="#9a9a9a"/><rect x="159.61" y="46.6" width=".6" height="1.2" fill="#777"/><rect x="162.02" y="46.6" width=".6" height="1.2" fill="#777"/><rect x="164.43" y="46.6" width=".6" height="1.2" fill="#777"/><rect x="166.84" y="46.6" width=".6" height="1.2" fill="#777"/><rect x="169.25" y="46.6" width=".6" height="1.2" fill="#777"/><rect x="171.66" y="46.6" width=".6" height="1.2" fill="#777"/><rect x="174.07" y="46.6" width=".6" height="1.2" fill="#777"/><rect x="176.48" y="46.6" width=".6" height="1.2" fill="#777"/><rect x="178.89" y="46.6" width=".6" height="1.2" fill="#777"/><rect x="181.30" y="42.3" width=".9" height="5.5" fill="#9a9a9a"/><rect x="183.71" y="46.6" width=".6" height="1.2" fill="#777"/><rect x="186.12" y="46.6" width=".6" height="1.2" fill="#777"/><rect x="188.53" y="46.6" width=".6" height="1.2" fill="#777"/><rect x="190.94" y="46.6" width=".6" height="1.2" fill="#777"/><rect x="193.35" y="46.6" width=".6" height="1.2" fill="#777"/><rect x="195.76" y="46.6" width=".6" height="1.2" fill="#777"/><rect x="198.17" y="46.6" width=".6" height="1.2" fill="#777"/><rect x="200.58" y="46.6" width=".6" height="1.2" fill="#777"/><rect x="202.99" y="46.6" width=".6" height="1.2" fill="#777"/><rect x="205.40" y="42.3" width=".9" height="5.5" fill="#9a9a9a"/><rect x="207.81" y="46.6" width=".6" height="1.2" fill="#777"/><rect x="210.22" y="46.6" width=".6" height="1.2" fill="#777"/><rect x="212.63" y="46.6" width=".6" height="1.2" fill="#777"/><rect x="215.04" y="46.6" width=".6" height="1.2" fill="#777"/><rect x="217.45" y="46.6" width=".6" height="1.2" fill="#777"/><rect x="219.86" y="46.6" width=".6" height="1.2" fill="#777"/><rect x="222.27" y="46.6" width=".6" height="1.2" fill="#777"/><rect x="224.68" y="46.6" width=".6" height="1.2" fill="#777"/><rect x="227.09" y="46.6" width=".6" height="1.2" fill="#777"/><rect x="229.50" y="42.3" width=".9" height="5.5" fill="#9a9a9a"/><rect x="231.91" y="46.6" width=".6" height="1.2" fill="#777"/><rect x="234.32" y="46.6" width=".6" height="1.2" fill="#777"/><rect x="236.73" y="46.6" width=".6" height="1.2" fill="#777"/><rect x="239.14" y="46.6" width=".6" height="1.2" fill="#777"/><rect x="241.55" y="46.6" width=".6" height="1.2" fill="#777"/><rect x="243.96" y="46.6" width=".6" height="1.2" fill="#777"/><rect x="246.37" y="46.6" width=".6" height="1.2" fill="#777"/><rect x="248.78" y="46.6" width=".6" height="1.2" fill="#777"/><rect x="251.19" y="46.6" width=".6" height="1.2" fill="#777"/><rect x="253.60" y="42.3" width=".9" height="5.5" fill="#9a9a9a"/><rect x="256.01" y="46.6" width=".6" height="1.2" fill="#777"/><rect x="258.42" y="46.6" width=".6" height="1.2" fill="#777"/><rect x="260.83" y="46.6" width=".6" height="1.2" fill="#777"/><rect x="263.24" y="46.6" width=".6" height="1.2" fill="#777"/><rect x="265.65" y="46.6" width=".6" height="1.2" fill="#777"/><rect x="268.06" y="46.6" width=".6" height="1.2" fill="#777"/><rect x="270.47" y="46.6" width=".6" height="1.2" fill="#777"/><rect x="272.88" y="46.6" width=".6" height="1.2" fill="#777"/><rect x="275.29" y="46.6" width=".6" height="1.2" fill="#777"/><rect x="277.70" y="42.3" width=".9" height="5.5" fill="#9a9a9a"/><rect x="280.11" y="46.6" width=".6" height="1.2" fill="#777"/><rect x="282.52" y="46.6" width=".6" height="1.2" fill="#777"/><rect x="284.93" y="46.6" width=".6" height="1.2" fill="#777"/><rect x="287.34" y="46.6" width=".6" height="1.2" fill="#777"/><rect x="289.75" y="46.6" width=".6" height="1.2" fill="#777"/><rect x="292.16" y="46.6" width=".6" height="1.2" fill="#777"/><rect x="294.57" y="46.6" width=".6" height="1.2" fill="#777"/><rect x="296.98" y="46.6" width=".6" height="1.2" fill="#777"/><rect x="299.39" y="46.6" width=".6" height="1.2" fill="#777"/><rect x="301.80" y="42.3" width=".9" height="5.5" fill="#9a9a9a"/><rect x="304.21" y="46.6" width=".6" height="1.2" fill="#777"/><rect x="306.62" y="46.6" width=".6" height="1.2" fill="#777"/><rect x="309.03" y="46.6" width=".6" height="1.2" fill="#777"/><rect x="311.44" y="46.6" width=".6" height="1.2" fill="#777"/><rect x="313.85" y="46.6" width=".6" height="1.2" fill="#777"/><rect x="316.26" y="46.6" width=".6" height="1.2" fill="#777"/><rect x="318.67" y="46.6" width=".6" height="1.2" fill="#777"/><rect x="321.08" y="46.6" width=".6" height="1.2" fill="#777"/><rect x="323.49" y="46.6" width=".6" height="1.2" fill="#777"/><rect x="325.90" y="42.3" width=".9" height="5.5" fill="#9a9a9a"/><rect x="328.31" y="46.6" width=".6" height="1.2" fill="#777"/><rect x="330.72" y="46.6" width=".6" height="1.2" fill="#777"/><rect x="333.13" y="46.6" width=".6" height="1.2" fill="#777"/><rect x="335.54" y="46.6" width=".6" height="1.2" fill="#777"/><rect x="337.95" y="46.6" width=".6" height="1.2" fill="#777"/><rect x="340.36" y="46.6" width=".6" height="1.2" fill="#777"/><rect x="342.77" y="46.6" width=".6" height="1.2" fill="#777"/><rect x="345.18" y="46.6" width=".6" height="1.2" fill="#777"/><rect x="347.59" y="46.6" width=".6" height="1.2" fill="#777"/><rect x="350.00" y="42.3" width=".9" height="5.5" fill="#9a9a9a"/><rect x="352.41" y="46.6" width=".6" height="1.2" fill="#777"/><rect x="354.82" y="46.6" width=".6" height="1.2" fill="#777"/><rect x="357.23" y="46.6" width=".6" height="1.2" fill="#777"/><rect x="359.64" y="46.6" width=".6" height="1.2" fill="#777"/><rect x="362.05" y="46.6" width=".6" height="1.2" fill="#777"/><rect x="364.46" y="46.6" width=".6" height="1.2" fill="#777"/><rect x="366.87" y="46.6" width=".6" height="1.2" fill="#777"/><rect x="369.28" y="46.6" width=".6" height="1.2" fill="#777"/><rect x="371.69" y="46.6" width=".6" height="1.2" fill="#777"/><rect x="374.10" y="42.3" width=".9" height="5.5" fill="#9a9a9a"/><rect x="120.2" y="65.35" width="5.5" height=".9" fill="#9a9a9a"/><rect x="124.6" y="67.76" width="1.2" height=".6" fill="#777"/><rect x="124.6" y="70.17" width="1.2" height=".6" fill="#777"/><rect x="124.6" y="72.58" width="1.2" height=".6" fill="#777"/><rect x="124.6" y="74.99" width="1.2" height=".6" fill="#777"/><rect x="124.6" y="77.40" width="1.2" height=".6" fill="#777"/><rect x="124.6" y="79.81" width="1.2" height=".6" fill="#777"/><rect x="124.6" y="82.22" width="1.2" height=".6" fill="#777"/><rect x="124.6" y="84.63" width="1.2" height=".6" fill="#777"/><rect x="124.6" y="87.04" width="1.2" height=".6" fill="#777"/><rect x="120.2" y="89.45" width="5.5" height=".9" fill="#9a9a9a"/><rect x="124.6" y="91.86" width="1.2" height=".6" fill="#777"/><rect x="124.6" y="94.27" width="1.2" height=".6" fill="#777"/><rect x="124.6" y="96.68" width="1.2" height=".6" fill="#777"/><rect x="124.6" y="99.09" width="1.2" height=".6" fill="#777"/><rect x="124.6" y="101.50" width="1.2" height=".6" fill="#777"/><rect x="124.6" y="103.91" width="1.2" height=".6" fill="#777"/><rect x="124.6" y="106.32" width="1.2" height=".6" fill="#777"/><rect x="124.6" y="108.73" width="1.2" height=".6" fill="#777"/><rect x="124.6" y="111.14" width="1.2" height=".6" fill="#777"/><rect x="120.2" y="113.55" width="5.5" height=".9" fill="#9a9a9a"/><rect x="124.6" y="115.96" width="1.2" height=".6" fill="#777"/><rect x="124.6" y="118.37" width="1.2" height=".6" fill="#777"/><rect x="124.6" y="120.78" width="1.2" height=".6" fill="#777"/><rect x="124.6" y="123.19" width="1.2" height=".6" fill="#777"/><rect x="124.6" y="125.60" width="1.2" height=".6" fill="#777"/><rect x="124.6" y="128.01" width="1.2" height=".6" fill="#777"/><rect x="124.6" y="130.42" width="1.2" height=".6" fill="#777"/><rect x="124.6" y="132.83" width="1.2" height=".6" fill="#777"/><rect x="124.6" y="135.24" width="1.2" height=".6" fill="#777"/><rect x="120.2" y="137.65" width="5.5" height=".9" fill="#9a9a9a"/><rect x="124.6" y="140.06" width="1.2" height=".6" fill="#777"/><rect x="124.6" y="142.47" width="1.2" height=".6" fill="#777"/><rect x="124.6" y="144.88" width="1.2" height=".6" fill="#777"/><rect x="124.6" y="147.29" width="1.2" height=".6" fill="#777"/><rect x="124.6" y="149.70" width="1.2" height=".6" fill="#777"/><rect x="124.6" y="152.11" width="1.2" height=".6" fill="#777"/><rect x="124.6" y="154.52" width="1.2" height=".6" fill="#777"/><rect x="124.6" y="156.93" width="1.2" height=".6" fill="#777"/><rect x="124.6" y="159.34" width="1.2" height=".6" fill="#777"/><rect x="120.2" y="161.75" width="5.5" height=".9" fill="#9a9a9a"/><rect x="124.6" y="164.16" width="1.2" height=".6" fill="#777"/><rect x="124.6" y="166.57" width="1.2" height=".6" fill="#777"/><rect x="124.6" y="168.98" width="1.2" height=".6" fill="#777"/><rect x="124.6" y="171.39" width="1.2" height=".6" fill="#777"/><rect x="124.6" y="173.80" width="1.2" height=".6" fill="#777"/><rect x="124.6" y="176.21" width="1.2" height=".6" fill="#777"/><rect x="124.6" y="178.62" width="1.2" height=".6" fill="#777"/><rect x="124.6" y="181.03" width="1.2" height=".6" fill="#777"/><rect x="124.6" y="183.44" width="1.2" height=".6" fill="#777"/><rect x="120.2" y="185.85" width="5.5" height=".9" fill="#9a9a9a"/><rect x="124.6" y="188.26" width="1.2" height=".6" fill="#777"/><rect x="124.6" y="190.67" width="1.2" height=".6" fill="#777"/><rect x="124.6" y="193.08" width="1.2" height=".6" fill="#777"/><rect x="124.6" y="195.49" width="1.2" height=".6" fill="#777"/><rect x="124.6" y="197.90" width="1.2" height=".6" fill="#777"/><rect x="124.6" y="200.31" width="1.2" height=".6" fill="#777"/><rect x="124.6" y="202.72" width="1.2" height=".6" fill="#777"/><rect x="124.6" y="205.13" width="1.2" height=".6" fill="#777"/><rect x="124.6" y="207.54" width="1.2" height=".6" fill="#777"/><rect x="120.2" y="209.95" width="5.5" height=".9" fill="#9a9a9a"/><rect x="124.6" y="212.36" width="1.2" height=".6" fill="#777"/><rect x="124.6" y="214.77" width="1.2" height=".6" fill="#777"/><rect x="124.6" y="217.18" width="1.2" height=".6" fill="#777"/><rect x="124.6" y="219.59" width="1.2" height=".6" fill="#777"/><rect x="124.6" y="222.00" width="1.2" height=".6" fill="#777"/><rect x="124.6" y="224.41" width="1.2" height=".6" fill="#777"/><rect x="124.6" y="226.82" width="1.2" height=".6" fill="#777"/><rect x="124.6" y="229.23" width="1.2" height=".6" fill="#777"/><rect x="124.6" y="231.64" width="1.2" height=".6" fill="#777"/><rect x="120.2" y="234.05" width="5.5" height=".9" fill="#9a9a9a"/><rect x="124.6" y="236.46" width="1.2" height=".6" fill="#777"/><rect x="124.6" y="238.87" width="1.2" height=".6" fill="#777"/><rect x="124.6" y="241.28" width="1.2" height=".6" fill="#777"/><rect x="124.6" y="243.69" width="1.2" height=".6" fill="#777"/><rect x="124.6" y="246.10" width="1.2" height=".6" fill="#777"/><rect x="124.6" y="248.51" width="1.2" height=".6" fill="#777"/><rect x="124.6" y="250.92" width="1.2" height=".6" fill="#777"/><rect x="124.6" y="253.33" width="1.2" height=".6" fill="#777"/><rect x="124.6" y="255.74" width="1.2" height=".6" fill="#777"/><rect x="120.2" y="258.15" width="5.5" height=".9" fill="#9a9a9a"/><rect x="124.6" y="260.56" width="1.2" height=".6" fill="#777"/><rect x="124.6" y="262.97" width="1.2" height=".6" fill="#777"/><rect x="124.6" y="265.38" width="1.2" height=".6" fill="#777"/><rect x="124.6" y="267.79" width="1.2" height=".6" fill="#777"/><rect x="124.6" y="270.20" width="1.2" height=".6" fill="#777"/><rect x="124.6" y="272.61" width="1.2" height=".6" fill="#777"/><rect x="124.6" y="275.02" width="1.2" height=".6" fill="#777"/><rect x="124.6" y="277.43" width="1.2" height=".6" fill="#777"/><rect x="124.6" y="279.84" width="1.2" height=".6" fill="#777"/><rect x="120.2" y="282.25" width="5.5" height=".9" fill="#9a9a9a"/><rect x="124.6" y="284.66" width="1.2" height=".6" fill="#777"/><rect x="124.6" y="287.07" width="1.2" height=".6" fill="#777"/><rect x="124.6" y="289.48" width="1.2" height=".6" fill="#777"/><rect x="124.6" y="291.89" width="1.2" height=".6" fill="#777"/><rect x="124.6" y="294.30" width="1.2" height=".6" fill="#777"/><rect x="124.6" y="296.71" width="1.2" height=".6" fill="#777"/><rect x="124.6" y="299.12" width="1.2" height=".6" fill="#777"/><rect x="124.6" y="301.53" width="1.2" height=".6" fill="#777"/><rect x="124.6" y="303.94" width="1.2" height=".6" fill="#777"/><rect x="120.2" y="306.35" width="5.5" height=".9" fill="#9a9a9a"/><rect x="124.6" y="308.76" width="1.2" height=".6" fill="#777"/><rect x="124.6" y="311.17" width="1.2" height=".6" fill="#777"/><rect x="124.6" y="313.58" width="1.2" height=".6" fill="#777"/><rect x="124.6" y="315.99" width="1.2" height=".6" fill="#777"/><rect x="124.6" y="318.40" width="1.2" height=".6" fill="#777"/><rect x="124.6" y="320.81" width="1.2" height=".6" fill="#777"/><rect x="124.6" y="323.22" width="1.2" height=".6" fill="#777"/><rect x="124.6" y="325.63" width="1.2" height=".6" fill="#777"/><rect x="124.6" y="328.04" width="1.2" height=".6" fill="#777"/><rect x="120.2" y="330.45" width="5.5" height=".9" fill="#9a9a9a"/><rect x="124.6" y="332.86" width="1.2" height=".6" fill="#777"/><rect x="124.6" y="335.27" width="1.2" height=".6" fill="#777"/><rect x="124.6" y="337.68" width="1.2" height=".6" fill="#777"/><rect x="124.6" y="340.09" width="1.2" height=".6" fill="#777"/><rect x="124.6" y="342.50" width="1.2" height=".6" fill="#777"/><rect x="124.6" y="344.91" width="1.2" height=".6" fill="#777"/><rect x="124.6" y="347.32" width="1.2" height=".6" fill="#777"/><rect x="124.6" y="349.73" width="1.2" height=".6" fill="#777"/><rect x="124.6" y="352.14" width="1.2" height=".6" fill="#777"/><rect x="120.2" y="354.55" width="5.5" height=".9" fill="#9a9a9a"/><rect x="124.6" y="356.96" width="1.2" height=".6" fill="#777"/><rect x="124.6" y="359.37" width="1.2" height=".6" fill="#777"/><rect x="124.6" y="361.78" width="1.2" height=".6" fill="#777"/><rect x="124.6" y="364.19" width="1.2" height=".6" fill="#777"/><rect x="124.6" y="366.60" width="1.2" height=".6" fill="#777"/><rect x="124.6" y="369.01" width="1.2" height=".6" fill="#777"/><rect x="124.6" y="371.42" width="1.2" height=".6" fill="#777"/><rect x="124.6" y="373.83" width="1.2" height=".6" fill="#777"/><rect x="124.6" y="376.24" width="1.2" height=".6" fill="#777"/><rect x="120.2" y="378.65" width="5.5" height=".9" fill="#9a9a9a"/><rect x="124.6" y="381.06" width="1.2" height=".6" fill="#777"/><rect x="124.6" y="383.47" width="1.2" height=".6" fill="#777"/><rect x="124.6" y="385.88" width="1.2" height=".6" fill="#777"/><rect x="124.6" y="388.29" width="1.2" height=".6" fill="#777"/><rect x="124.6" y="390.70" width="1.2" height=".6" fill="#777"/><rect x="124.6" y="393.11" width="1.2" height=".6" fill="#777"/><rect x="124.6" y="395.52" width="1.2" height=".6" fill="#777"/><rect x="124.6" y="397.93" width="1.2" height=".6" fill="#777"/><rect x="124.6" y="400.34" width="1.2" height=".6" fill="#777"/><rect x="120.2" y="402.75" width="5.5" height=".9" fill="#9a9a9a"/><rect x="124.6" y="405.16" width="1.2" height=".6" fill="#777"/><rect x="124.6" y="407.57" width="1.2" height=".6" fill="#777"/><rect x="124.6" y="409.98" width="1.2" height=".6" fill="#777"/><rect x="124.6" y="412.39" width="1.2" height=".6" fill="#777"/><rect x="124.6" y="414.80" width="1.2" height=".6" fill="#777"/><rect x="124.6" y="417.21" width="1.2" height=".6" fill="#777"/><rect x="124.6" y="419.62" width="1.2" height=".6" fill="#777"/><rect x="124.6" y="422.03" width="1.2" height=".6" fill="#777"/><rect x="124.6" y="424.44" width="1.2" height=".6" fill="#777"/><rect x="120.2" y="426.85" width="5.5" height=".9" fill="#9a9a9a"/><rect x="124.6" y="429.26" width="1.2" height=".6" fill="#777"/><rect x="124.6" y="431.67" width="1.2" height=".6" fill="#777"/><rect x="124.6" y="434.08" width="1.2" height=".6" fill="#777"/><rect x="124.6" y="436.49" width="1.2" height=".6" fill="#777"/><rect x="124.6" y="438.90" width="1.2" height=".6" fill="#777"/><rect x="124.6" y="441.31" width="1.2" height=".6" fill="#777"/><rect x="124.6" y="443.72" width="1.2" height=".6" fill="#777"/><rect x="124.6" y="446.13" width="1.2" height=".6" fill="#777"/><rect x="124.6" y="448.54" width="1.2" height=".6" fill="#777"/><rect x="120.2" y="450.95" width="5.5" height=".9" fill="#9a9a9a"/><rect x="124.6" y="453.36" width="1.2" height=".6" fill="#777"/><rect x="124.6" y="455.77" width="1.2" height=".6" fill="#777"/><rect x="124.6" y="458.18" width="1.2" height=".6" fill="#777"/><rect x="124.6" y="460.59" width="1.2" height=".6" fill="#777"/><rect x="124.6" y="463.00" width="1.2" height=".6" fill="#777"/><rect x="124.6" y="465.41" width="1.2" height=".6" fill="#777"/><rect x="124.6" y="467.82" width="1.2" height=".6" fill="#777"/><rect x="124.6" y="470.23" width="1.2" height=".6" fill="#777"/><rect x="124.6" y="472.64" width="1.2" height=".6" fill="#777"/><rect x="120.2" y="475.05" width="5.5" height=".9" fill="#9a9a9a"/><rect x="124.6" y="477.46" width="1.2" height=".6" fill="#777"/><rect x="124.6" y="479.87" width="1.2" height=".6" fill="#777"/><rect x="124.6" y="482.28" width="1.2" height=".6" fill="#777"/><rect x="124.6" y="484.69" width="1.2" height=".6" fill="#777"/><rect x="124.6" y="487.10" width="1.2" height=".6" fill="#777"/><rect x="124.6" y="489.51" width="1.2" height=".6" fill="#777"/><rect x="124.6" y="491.92" width="1.2" height=".6" fill="#777"/><rect x="124.6" y="494.33" width="1.2" height=".6" fill="#777"/><rect x="124.6" y="496.74" width="1.2" height=".6" fill="#777"/><rect x="120.2" y="499.15" width="5.5" height=".9" fill="#9a9a9a"/><rect x="124.6" y="501.56" width="1.2" height=".6" fill="#777"/><rect x="124.6" y="503.97" width="1.2" height=".6" fill="#777"/><rect x="124.6" y="506.38" width="1.2" height=".6" fill="#777"/><rect x="124.6" y="508.79" width="1.2" height=".6" fill="#777"/><rect x="124.6" y="511.20" width="1.2" height=".6" fill="#777"/><rect x="124.6" y="513.61" width="1.2" height=".6" fill="#777"/><rect x="124.6" y="516.02" width="1.2" height=".6" fill="#777"/><rect x="124.6" y="518.43" width="1.2" height=".6" fill="#777"/><rect x="124.6" y="520.84" width="1.2" height=".6" fill="#777"/></svg>
<div class="t" style="left:134.29999999999998px;top:42.30px;font-size:6px;color:#7a7a7a;transform:scaleX(0.85);">0</div>
<div class="t" style="left:158.39999999999998px;top:42.30px;font-size:6px;color:#7a7a7a;transform:scaleX(0.85);">100</div>
<div class="t" style="left:182.5px;top:42.30px;font-size:6px;color:#7a7a7a;transform:scaleX(0.85);">200</div>
<div class="t" style="left:206.6px;top:42.30px;font-size:6px;color:#7a7a7a;transform:scaleX(0.85);">300</div>
<div class="t" style="left:230.7px;top:42.30px;font-size:6px;color:#7a7a7a;transform:scaleX(0.85);">400</div>
<div class="t" style="left:254.79999999999998px;top:42.30px;font-size:6px;color:#7a7a7a;transform:scaleX(0.85);">500</div>
<div class="t" style="left:278.90000000000003px;top:42.30px;font-size:6px;color:#7a7a7a;transform:scaleX(0.85);">600</div>
<div class="t" style="left:303.0px;top:42.30px;font-size:6px;color:#7a7a7a;transform:scaleX(0.85);">700</div>
<div class="t" style="left:327.09999999999997px;top:42.30px;font-size:6px;color:#7a7a7a;transform:scaleX(0.85);">800</div>
<div class="t" style="left:351.2px;top:42.30px;font-size:6px;color:#7a7a7a;transform:scaleX(0.85);">900</div>
<div class="t" style="left:375.3px;top:42.30px;font-size:6px;color:#7a7a7a;transform:scaleX(0.85);">1000</div>
<div class="t" style="left:120.50px;top:66.55px;font-size:6px;color:#7a7a7a;writing-mode:vertical-rl;transform:rotate(180deg);transform-origin:50% 50%;line-height:5px">400</div>
<div class="t" style="left:120.50px;top:90.65px;font-size:6px;color:#7a7a7a;writing-mode:vertical-rl;transform:rotate(180deg);transform-origin:50% 50%;line-height:5px">300</div>
<div class="t" style="left:120.50px;top:114.75px;font-size:6px;color:#7a7a7a;writing-mode:vertical-rl;transform:rotate(180deg);transform-origin:50% 50%;line-height:5px">200</div>
<div class="t" style="left:120.50px;top:138.85px;font-size:6px;color:#7a7a7a;writing-mode:vertical-rl;transform:rotate(180deg);transform-origin:50% 50%;line-height:5px">100</div>
<div class="t" style="left:120.50px;top:162.95px;font-size:6px;color:#7a7a7a;writing-mode:vertical-rl;transform:rotate(180deg);transform-origin:50% 50%;line-height:5px">0</div>
<div class="t" style="left:120.50px;top:187.05px;font-size:6px;color:#7a7a7a;writing-mode:vertical-rl;transform:rotate(180deg);transform-origin:50% 50%;line-height:5px">100</div>
<div class="t" style="left:120.50px;top:211.15px;font-size:6px;color:#7a7a7a;writing-mode:vertical-rl;transform:rotate(180deg);transform-origin:50% 50%;line-height:5px">200</div>
<div class="t" style="left:120.50px;top:235.25px;font-size:6px;color:#7a7a7a;writing-mode:vertical-rl;transform:rotate(180deg);transform-origin:50% 50%;line-height:5px">300</div>
<div class="t" style="left:120.50px;top:259.35px;font-size:6px;color:#7a7a7a;writing-mode:vertical-rl;transform:rotate(180deg);transform-origin:50% 50%;line-height:5px">400</div>
<div class="t" style="left:120.50px;top:283.45px;font-size:6px;color:#7a7a7a;writing-mode:vertical-rl;transform:rotate(180deg);transform-origin:50% 50%;line-height:5px">500</div>
<div class="t" style="left:120.50px;top:307.55px;font-size:6px;color:#7a7a7a;writing-mode:vertical-rl;transform:rotate(180deg);transform-origin:50% 50%;line-height:5px">600</div>
<div class="t" style="left:120.50px;top:331.65px;font-size:6px;color:#7a7a7a;writing-mode:vertical-rl;transform:rotate(180deg);transform-origin:50% 50%;line-height:5px">700</div>
<div class="t" style="left:120.50px;top:355.75px;font-size:6px;color:#7a7a7a;writing-mode:vertical-rl;transform:rotate(180deg);transform-origin:50% 50%;line-height:5px">800</div>
<div class="t" style="left:120.50px;top:379.85px;font-size:6px;color:#7a7a7a;writing-mode:vertical-rl;transform:rotate(180deg);transform-origin:50% 50%;line-height:5px">900</div>
<div class="t" style="left:120.50px;top:403.95px;font-size:6px;color:#7a7a7a;writing-mode:vertical-rl;transform:rotate(180deg);transform-origin:50% 50%;line-height:5px">1000</div>
<div class="t" style="left:120.50px;top:428.05px;font-size:6px;color:#7a7a7a;writing-mode:vertical-rl;transform:rotate(180deg);transform-origin:50% 50%;line-height:5px">1100</div>
<div class="t" style="left:120.50px;top:452.15px;font-size:6px;color:#7a7a7a;writing-mode:vertical-rl;transform:rotate(180deg);transform-origin:50% 50%;line-height:5px">1200</div>
<div class="t" style="left:120.50px;top:476.25px;font-size:6px;color:#7a7a7a;writing-mode:vertical-rl;transform:rotate(180deg);transform-origin:50% 50%;line-height:5px">1300</div>
<div class="t" style="left:120.50px;top:500.35px;font-size:6px;color:#7a7a7a;writing-mode:vertical-rl;transform:rotate(180deg);transform-origin:50% 50%;line-height:5px">1400</div>
<div class="a" style="left:126.5px;top:48px;width:249.7px;height:476.8px;background:#414141;"></div>
<div class="a" style="left:132.5px;top:161.75px;width:241.75px;height:242px;background:#0dfb3b;"></div>
<div class="a" style="left:120px;top:524.8px;width:257px;height:6.5px;background:#6a6a6a;"></div>
<div class="a" style="left:121px;top:525.5px;width:10.5px;height:5.5px;background:#747474;"></div>
<div class="t" style="left:121.5px;top:525.55px;font-size:5.5px;color:#dcdcdc;transform:scaleX(0.8);">55.2</div>
<svg style="left:0px;top:0px" width="480" height="540"><path d="M130 530.5l33-5v5z" fill="#4a4a4a"/><rect x="163" y="525.5" width="16" height="5.5" fill="#7a7a7a"/><circle cx="167" cy="528.2" r="1.8" fill="#eee" stroke="#333" stroke-width=".5"/><circle cx="175" cy="528.2" r="1.8" fill="#eee" stroke="#333" stroke-width=".5"/>
<rect x="183" y="525.3" width="6" height="6" fill="#1e1e1e"/><rect x="191" y="525.5" width="20" height="5.5" fill="#747474"/><path d="M211 530.5l13-5h10v5z" fill="#4a4a4a"/><path d="M234 525.5l8 5h-8z" fill="#4a4a4a"/>
<rect x="233.5" y="525" width="17" height="6" fill="#767676"/><path d="M235.5 530.3v-1.5a2.2 2.2 0 0 1 4.4 0v1.5M244 530.3v-1.5a2.2 2.2 0 0 1 4.4 0v1.5" fill="none" stroke="#1a1a1a" stroke-width=".9"/><circle cx="256.5" cy="528.2" r="2.2" fill="none" stroke="#8a8a8a" stroke-width=".7"/><rect x="262" y="526.5" width="3" height="3" fill="#888"/>
<rect x="297" y="526" width="42" height="4" fill="#7f7f7f" rx=".5"/><rect x="316" y="527" width="4" height="2" fill="#666"/><rect x="372" y="526.2" width="3.5" height="3.5" fill="#888" stroke="#666" stroke-width=".5"/></svg>
<div class="t" style="left:193px;top:525.55px;font-size:5.5px;color:#dcdcdc;transform:scaleX(0.8);">0.0</div>
<div class="a" style="left:120px;top:531.3px;width:262px;height:7px;background:#6e6e6e;"></div>
<div class="a" style="left:121px;top:532px;width:7px;height:6px;background:#767676;"></div>
<svg style="left:0px;top:0px" width="480" height="540"><path d="M122.5 535.5l2-1.8 2 1.8M122.5 537l2-1.8 2 1.8" fill="none" stroke="#333" stroke-width=".7"/></svg>
<div class="a" style="left:120px;top:538px;width:262px;height:2px;background:#585858;"></div>
<div class="a" style="left:382px;top:21px;width:98px;height:519px;background:#666666;"></div>
<div class="a" style="left:382px;top:21px;width:1px;height:519px;background:#555555;"></div>
<div class="a" style="left:383px;top:22px;width:95px;height:7px;background:#4b4b4b;"></div>
<svg style="left:0px;top:0px" width="480" height="40"><g fill="none" stroke="#c8c8c8" stroke-width=".8"><path d="M388 23.5l-1.5 2 1.5 2M395 23.5l1.5 2-1.5 2M397 23.5l1.5 2-1.5 2M464 23.5l1.5 2-1.5 2M472 23.5l1.5 2-1.5 2M474 23.5l1.5 2-1.5 2"/></g><rect x="400" y="23.5" width="2" height="3" fill="#5a5a5a"/></svg>
<div class="a" style="left:383px;top:29px;width:16px;height:511px;background:#5e5e5e;"></div>
<div class="a" style="left:384px;top:30.5px;width:14.5px;height:17px;background:#777777;border:1px solid #666;border-radius:1px"></div>
<div class="a" style="left:384px;top:50.0px;width:14.5px;height:17px;background:#777777;border:1px solid #666;border-radius:1px"></div>
<div class="a" style="left:384px;top:69.4px;width:14.5px;height:17px;background:#777777;border:1px solid #666;border-radius:1px"></div>
<div class="a" style="left:384px;top:88.8px;width:14.5px;height:17px;background:#777777;border:1px solid #666;border-radius:1px"></div>
<div class="a" style="left:384px;top:108.3px;width:14.5px;height:17px;background:#777777;border:1px solid #666;border-radius:1px"></div>
<div class="a" style="left:384px;top:127.8px;width:14.5px;height:17px;background:#777777;border:1px solid #666;border-radius:1px"></div>
<div class="a" style="left:384px;top:147.2px;width:14.5px;height:17px;background:#777777;border:1px solid #666;border-radius:1px"></div>
<div class="a" style="left:384px;top:166.7px;width:14.5px;height:17px;background:#777777;border:1px solid #666;border-radius:1px"></div>
<div class="a" style="left:384px;top:186.1px;width:14.5px;height:17px;background:#777777;border:1px solid #666;border-radius:1px"></div>
<div class="a" style="left:384px;top:205.5px;width:14.5px;height:17px;background:#777777;border:1px solid #666;border-radius:1px"></div>
<div class="a" style="left:384px;top:225.0px;width:14.5px;height:17px;background:#777777;border:1px solid #666;border-radius:1px"></div>
<svg style="left:0px;top:0px" width="480" height="60"><circle cx="391" cy="38.8" r="5.6" fill="#c4c4c4" stroke="#1e1e1e" stroke-width="1.2"/><circle cx="390" cy="37.5" r="2.5" fill="#dedede"/><path d="M391 39.5l4.5 4.8" stroke="#1e1e1e" stroke-width="1.3"/></svg>
<svg style="left:0px;top:0px" width="480" height="260"><path d="M386.5 55.0h3l1 1h4.5v2.5" fill="#ddd" stroke="#333" stroke-width=".6"/><path d="M386.5 55.0v7h8l2-5h-8.5l-1.5 5" fill="#d4d4d4" stroke="#333" stroke-width=".6"/></svg>
<svg style="left:0px;top:0px" width="480" height="260"><path d="M386 75.9a3 3 0 0 1 5.5-1.5v5h-5.5z" fill="#cfcfcf" stroke="#888" stroke-width=".4"/><rect x="390.3" y="76.4" width="6" height="5.8" fill="#f6f6f6" stroke="#444" stroke-width=".5"/><path d="M391.5 77.6l3 3M391.5 77.6h2.5M391.5 77.6v2.5" fill="none" stroke="#111" stroke-width="1"/></svg>
<svg style="left:0px;top:0px" width="480" height="260"><path d="M386 95.3a3 3 0 0 1 5.5-1.5v5h-5.5z" fill="#cfcfcf" stroke="#888" stroke-width=".4"/><rect x="390.3" y="95.8" width="6" height="5.8" fill="#f6f6f6" stroke="#444" stroke-width=".5"/><path d="M391.5 97.0l3.5 3.5M395 97.0l-3.5 3.5" fill="none" stroke="#222" stroke-width=".8"/></svg>
<svg style="left:0px;top:0px" width="480" height="260"><path d="M386 114.8a3 3 0 0 1 5.5-1.5v5h-5.5z" fill="#cfcfcf" stroke="#888" stroke-width=".4"/><rect x="390.3" y="115.3" width="6" height="5.8" fill="#f6f6f6" stroke="#444" stroke-width=".5"/><circle cx="393.2" cy="118.1" r="2.2" fill="none" stroke="#999" stroke-width=".8" stroke-dasharray=".8 .6"/></svg>
<svg style="left:0px;top:0px" width="480" height="260"><path d="M386 134.2a3 3 0 0 1 5.5-1.5v5h-5.5z" fill="#cfcfcf" stroke="#888" stroke-width=".4"/><rect x="390.3" y="134.8" width="6" height="5.8" fill="#f6f6f6" stroke="#444" stroke-width=".5"/><path d="M392 135.9h3M392 137.4h3M392 138.9h3" stroke="#333" stroke-width=".6"/></svg>
<svg style="left:0px;top:0px" width="480" height="260"><path d="M386 153.7a3 3 0 0 1 5.5-1.5v5h-5.5z" fill="#cfcfcf" stroke="#888" stroke-width=".4"/><rect x="390.3" y="154.2" width="6" height="5.8" fill="#f6f6f6" stroke="#444" stroke-width=".5"/><path d="M391.3 155.4h1.5M391.3 155.4v1.5M395.2 155.4h-1.5M395.2 155.4v1.5M391.3 159.0h1.5M391.3 159.0v-1.5M395.2 159.0h-1.5M395.2 159.0v-1.5" fill="none" stroke="#222" stroke-width=".7"/></svg>
<svg style="left:0px;top:0px" width="480" height="260"><path d="M386 173.2a3 3 0 0 1 5.5-1.5v5h-5.5z" fill="#cfcfcf" stroke="#888" stroke-width=".4"/><rect x="390.3" y="173.7" width="6" height="5.8" fill="#f6f6f6" stroke="#444" stroke-width=".5"/><path d="M391 178.5l2-3 1.2 1.5.8-1 1 2.5z" fill="#222"/></svg>
<svg style="left:0px;top:0px" width="480" height="260"><path d="M386 192.6a3 3 0 0 1 5.5-1.5v5h-5.5z" fill="#cfcfcf" stroke="#888" stroke-width=".4"/><rect x="390.3" y="193.1" width="6" height="5.8" fill="#f6f6f6" stroke="#444" stroke-width=".5"/><path d="M391.5 197.9l4-3.5" stroke="#222" stroke-width=".9"/></svg>
<svg style="left:0px;top:0px" width="480" height="260"><path d="M386 212.0a3 3 0 0 1 5.5-1.5v5h-5.5z" fill="#cfcfcf" stroke="#888" stroke-width=".4"/><rect x="390.3" y="212.5" width="6" height="5.8" fill="#f6f6f6" stroke="#444" stroke-width=".5"/><circle cx="393.2" cy="215.3" r="2" fill="#fff" stroke="#555" stroke-width=".6"/><path d="M392 215.3h2.5" stroke="#888" stroke-width=".4"/></svg>
<svg style="left:0px;top:0px" width="480" height="260"><path d="M386 231.5a3 3 0 0 1 5.5-1.5v5h-5.5z" fill="#cfcfcf" stroke="#888" stroke-width=".4"/><rect x="390.3" y="232.0" width="6" height="5.8" fill="#f6f6f6" stroke="#444" stroke-width=".5"/><path d="M393.2 233.2v3M391.8 234.7l1.4 1.5 1.4-1.5z" stroke="#111" stroke-width=".8" fill="#111"/></svg>
<div class="a" style="left:399px;top:29px;width:3.5px;height:511px;background:#686868;"></div>
<div class="a" style="left:401.5px;top:111px;width:1px;height:426px;background:#5a5a5a;"></div>
<div class="a" style="left:400px;top:30px;width:77.5px;height:81px;background:#707070;"></div>
<div class="a" style="left:401px;top:31px;width:7px;height:7px;background:#767676;border:1px solid #636363"></div>
<div class="a" style="left:409px;top:30.5px;width:31.5px;height:9px;background:#7a7a7a;border:1px solid #5e5e5e;border-bottom:none"></div>
<div class="a" style="left:441px;top:31.5px;width:11px;height:7.5px;background:#787878;border:1px solid #636363;border-bottom:none"></div>
<div class="a" style="left:453px;top:31.5px;width:11px;height:7.5px;background:#787878;border:1px solid #636363;border-bottom:none"></div>
<div class="a" style="left:465px;top:31.5px;width:11px;height:7.5px;background:#787878;border:1px solid #636363;border-bottom:none"></div>
<svg style="left:0px;top:0px" width="480" height="60"><rect x="410" y="32" width="5.5" height="4" rx="1" fill="#e02020"/><rect x="411" y="33" width="3.5" height="2" fill="#fff"/><rect x="414.5" y="36.5" width="1.5" height="1.5" fill="#eee"/>
<rect x="443.5" y="33" width="3.5" height="3" fill="#eee" stroke="#333" stroke-width=".4"/><rect x="447" y="33" width="2" height="3" fill="#eee" stroke="#333" stroke-width=".4"/><path d="M455 37l3-3M459 36l1.5-1.5" stroke="#333" stroke-width=".6"/><rect x="470" y="33" width="1.2" height="4.5" fill="#ddd" stroke="#333" stroke-width=".3"/></svg>
<div class="t" style="left:417.5px;top:32.20px;font-size:6px;color:#d8d8d8;transform:scaleX(0.74);">Navigator</div>
<div class="a" style="left:400.5px;top:39px;width:74px;height:72px;background:#7a2030;"></div>
<div class="a" style="left:402px;top:40px;width:71px;height:70.5px;background:#00ff00;"></div>
<div class="a" style="left:474.5px;top:39px;width:3px;height:72px;background:#6c6c6c;"></div>
<div class="a" style="left:400px;top:111px;width:77.5px;height:18px;background:#737373;"></div>
<div class="a" style="left:400px;top:111px;width:77.5px;height:1px;background:#888;"></div>
<div class="a" style="left:402px;top:113px;width:13px;height:6.5px;background:#6a6a6a;border:1px solid #5e5e5e"></div>
<div class="a" style="left:402px;top:122px;width:13px;height:6.5px;background:#6a6a6a;border:1px solid #5e5e5e"></div>
<div class="t" style="left:403px;top:113.55px;font-size:5.5px;color:#d8d8d8;transform:scaleX(0.8);">55.2</div>
<div class="t" style="left:403px;top:122.55px;font-size:5.5px;color:#d8d8d8;transform:scaleX(0.8);">0.0</div>
<div class="a" style="left:414.5px;top:112px;width:1px;height:17px;background:#5c5c5c;"></div>
<svg style="left:0px;top:0px" width="480" height="140"><path d="M416 119.5l11-4.5v4.5z" fill="#4a4a4a"/><path d="M416 128.5l4-4h4l3 4z" fill="#4a4a4a"/>
<circle cx="434" cy="116" r="2.3" fill="#eee" stroke="#222" stroke-width=".7"/><path d="M435.5 117.5l1.5 1.5" stroke="#222" stroke-width=".9"/>
<circle cx="442.3" cy="116" r="2.3" fill="#eee" stroke="#222" stroke-width=".7"/><circle cx="442.3" cy="116" r=".9" fill="#222"/><path d="M443.8 117.5l1.5 1.5" stroke="#222" stroke-width=".9"/>
<rect x="448.5" y="112.8" width="6.5" height="6.5" fill="#1a1a1a"/><rect x="450" y="114.3" width="3.5" height="3.5" fill="none" stroke="#555" stroke-width=".5"/>
<path d="M458 114l7 4" stroke="#eee" stroke-width="2"/><path d="M458.5 113.5l6.5 5" stroke="#222" stroke-width=".7"/>
<rect x="467.5" y="113" width="6.5" height="6" fill="#eee"/><path d="M467.5 113l6.5 6" stroke="#222" stroke-width="1"/>
<path d="M431.5 127.5v-1.5a2.5 2.5 0 0 1 5 0v1M439.5 127.5v-1a2.5 2.5 0 0 1 5 0v1.5" fill="none" stroke="#111" stroke-width="1.1"/><path d="M435.3 126.5l1.2 1.5 1.2-1.5M438.3 126.5l1.2 1.5 1.2-1.5" fill="#111"/>
<circle cx="451.5" cy="125.5" r="2.5" fill="none" stroke="#777" stroke-width=".8" stroke-dasharray=".9 .7"/>
<path d="M459.5 127.5v-1.5a2.7 2.7 0 0 1 5.4 0v1.5" fill="none" stroke="#111" stroke-width="1.1"/><rect x="458.7" y="126.3" width="1.8" height="1.8" fill="#eee"/>
<path d="M468 127.5a3.3 3.3 0 0 1 5.5-3.5" fill="none" stroke="#111" stroke-width="1.2"/><rect x="471.5" y="126.5" width="2" height="2" fill="#eee"/></svg>
<div class="a" style="left:400px;top:129px;width:77.5px;height:10.5px;background:#6e6e6e;"></div>
<div class="a" style="left:401px;top:131px;width:7px;height:7px;background:#767676;border:1px solid #636363"></div>
<div class="a" style="left:408.7px;top:131px;width:39.5px;height:8px;background:#7a7a7a;border:1px solid #5e5e5e;border-bottom:none"></div>
<div class="a" style="left:449px;top:131.5px;width:13px;height:7.5px;background:#787878;border:1px solid #636363;border-bottom:none"></div>
<div class="a" style="left:462.5px;top:131.5px;width:12px;height:7.5px;background:#787878;border:1px solid #636363;border-bottom:none"></div>
<svg style="left:0px;top:0px" width="480" height="145"><path d="M411 135.5l1.5 1.5 4-4.5" fill="none" stroke="#e01010" stroke-width="1"/><rect x="410" y="137.8" width="6" height="1.2" fill="#111"/>
<path d="M451 134h5v3h-5z" fill="none" stroke="#555" stroke-width=".5"/><path d="M467 137l1.5-2 1.5 2z" fill="#ddd"/></svg>
<div class="t" style="left:419.5px;top:132.30px;font-size:6px;color:#d8d8d8;transform:scaleX(0.74);">Layer Property</div>
<div class="a" style="left:400px;top:139.5px;width:77.5px;height:9.5px;background:#737373;"></div>
<div class="a" style="left:401.5px;top:140.5px;width:73.5px;height:7.5px;background:#7a7a7a;border:1px solid #686868;border-radius:1px"></div>
<div class="t" style="left:405px;top:141.05px;font-size:6.3px;color:#e0e0e0;transform:scaleX(0.8);">Effect</div>
<svg style="left:0px;top:0px" width="480" height="150"><path d="M473 143l1-1.3 1 1.3zM473 145.5l1 1.3 1-1.3z" fill="#333"/></svg>
<div class="a" style="left:400px;top:149px;width:77.5px;height:9.5px;background:#6a6a6a;"></div>
<div class="a" style="left:401px;top:150.5px;width:7px;height:7px;background:#767676;border:1px solid #636363"></div>
<div class="a" style="left:408.7px;top:150px;width:22.5px;height:8.5px;background:#7a7a7a;border:1px solid #5e5e5e;border-bottom:none"></div>
<div class="a" style="left:432px;top:150px;width:11px;height:8.5px;background:#777777;border:1px solid #5e5e5e;border-bottom:none"></div>
<div class="a" style="left:443.5px;top:150.5px;width:13.5px;height:8px;background:#747474;border:1px solid #5e5e5e;border-bottom:none"></div>
<div class="a" style="left:457.5px;top:150.5px;width:20px;height:8px;background:#6e6e6e;"></div>
<svg style="left:0px;top:0px" width="480" height="160"><path d="M411 152.3l3-1 3 1-3 1z M411 154.3l3 1 3-1M411 156.3l3 1 3-1" fill="none" stroke="#222" stroke-width=".5"/><path d="M411.5 158h5" stroke="#eee" stroke-width=".8"/>
<circle cx="436" cy="154.5" r="2.3" fill="#eee" stroke="#222" stroke-width=".6"/><rect x="438.5" y="151.5" width="3" height="3" fill="#333"/><path d="M447 156l2-2 2 1.5 2-2" fill="none" stroke="#555" stroke-width=".6"/></svg>
<div class="t" style="left:419.5px;top:151.50px;font-size:6px;color:#d8d8d8;transform:scaleX(0.68);">Layer</div>
<div class="a" style="left:400px;top:158.5px;width:77.5px;height:9.5px;background:#737373;"></div>
<div class="a" style="left:401px;top:159.5px;width:36px;height:8px;background:#777777;border:1px solid #666"></div>
<div class="t" style="left:409.5px;top:160.35px;font-size:6.5px;color:#e6e6e6;transform:scaleX(0.72);">Normal</div>
<svg style="left:0px;top:0px" width="480" height="170"><path d="M433 163h3l-1.5 1.8z" fill="#333"/></svg>
<div class="a" style="left:440.5px;top:160.5px;width:18px;height:6px;background:#f0f0f0;border:1px solid #666;border-radius:1px"></div>
<div class="a" style="left:458.5px;top:159px;width:1px;height:9px;background:#5e5e5e;"></div>
<div class="t r" style="right:9.50px;top:160.35px;font-size:6.5px;color:#e0e0e0;transform:scaleX(0.8);">100</div>
<svg style="left:0px;top:0px" width="480" height="170"><path d="M471 163l1.7-2 1.7 2zM471 164.5l1.7 2 1.7-2z" fill="#222"/></svg>
<div class="a" style="left:400px;top:168px;width:77.5px;height:20.5px;background:#727272;"></div>
<div class="a" style="left:402px;top:177.5px;width:73px;height:1px;background:#666;"></div>
<svg style="left:0px;top:0px" width="480" height="190"><ellipse cx="416.5" cy="173" rx="3.5" ry="2.5" fill="#2a2a2a"/><path d="M413.5 172.5h6" stroke="#ccc" stroke-width=".6"/>
<rect x="424" y="170" width="2" height="6.5" fill="#eee" stroke="#222" stroke-width=".5"/>
<path d="M433 169.5a2.5 2.5 0 0 1 2.5 2.5v4.5h-5V172a2.5 2.5 0 0 1 2.5-2.5z" fill="#ddd" stroke="#222" stroke-width=".8"/>
<circle cx="440" cy="172" r="2" fill="#eee" stroke="#333" stroke-width=".5"/><path d="M442 176l4-3" stroke="#eee" stroke-width="1.5"/>
<rect x="448.5" y="169.5" width="12" height="7" fill="#767676" stroke="#6a6a6a" stroke-width=".5"/><rect x="462" y="169.5" width="13" height="7" fill="#767676" stroke="#6a6a6a" stroke-width=".5"/>
<path d="M457 172.5h2.5l-1.2 1.5z" fill="#999"/><path d="M471 172.5h2.5l-1.2 1.5z" fill="#999"/>
<g fill="#f4f4f4" stroke="#333" stroke-width=".5"><path d="M407.5 179.5h5v6.5h-5z"/><path d="M415.5 179.5h5v6.5h-5z"/><rect x="419" y="184" width="3" height="3"/><path d="M424.5 180h4v6h-4z" fill="#ccc"/><path d="M427 182h4v5h-4z"/>
<circle cx="436.5" cy="182.5" r="2.5" fill="#999" stroke="#777"/><path d="M441.5 183.5a3 3 0 1 1 6 0v3h-6z"/><rect x="451" y="180.5" width="6.5" height="5" fill="#222"/><rect x="452" y="181.5" width="3" height="3" fill="#fafafa" stroke="none"/><path d="M460 184.5c0-2 2-3 4-2v4h-4z" fill="#bbb"/><path d="M469 180.5h5.5l-.8 6h-4z"/></g></svg>
<div class="a" style="left:402.5px;top:188.5px;width:67.5px;height:348.5px;background:#7a7b7e;"></div>
<div class="a" style="left:470px;top:188px;width:6px;height:349px;background:#6c6c6c;"></div>
<div class="a" style="left:476px;top:188px;width:2px;height:352px;background:#5c5c5c;"></div>
<div class="a" style="left:478px;top:21px;width:2px;height:519px;background:#6c6c6c;"></div>
<div class="a" style="left:400px;top:537px;width:80px;height:3px;background:#5c5c5c;"></div>
<div class="a" style="left:402.5px;top:188.5px;width:67.5px;height:18px;background:#727272;"></div>
<div class="a" style="left:402.5px;top:206.5px;width:67.5px;height:18px;background:#767676;"></div>
<div class="a" style="left:402.5px;top:206px;width:67.5px;height:1px;background:#666;"></div>
<div class="a" style="left:402.5px;top:224.3px;width:67.5px;height:1px;background:#666;"></div>
<div class="a" style="left:410.8px;top:188.5px;width:1px;height:36px;background:#666;"></div>
<div class="a" style="left:418.8px;top:188.5px;width:1px;height:36px;background:#666;"></div>
<div class="a" style="left:419.5px;top:189px;width:50.5px;height:17px;background:#7b96a8;"></div>
<div class="a" style="left:421.3px;top:189.8px;width:16px;height:16px;background:#00ff00;border:1px solid #2e3a44"></div>
<div class="a" style="left:421.5px;top:207.5px;width:15.5px;height:16px;background:#fdfdfd;border:1px solid #555"></div>
<div class="t" style="left:438.5px;top:191.05px;font-size:6.5px;color:#e4ecf2;transform:scaleX(0.7);">100 % Normal</div>
<div class="t" style="left:438.5px;top:200.05px;font-size:6.5px;color:#e4ecf2;transform:scaleX(0.72);">Layer 1</div>
<div class="t" style="left:438.5px;top:217.55px;font-size:6.5px;color:#e0e0e0;transform:scaleX(0.72);">Paper</div>
<svg style="left:0px;top:0px" width="480" height="230"><path d="M404.5 198c1-1.3 2-1.8 3.5-1.8s2.5.5 3.3 1.8c-.8 1.2-2 1.8-3.3 1.8s-2.5-.6-3.5-1.8z" fill="#1a1a1a"/><circle cx="407.5" cy="197.8" r=".7" fill="#ddd"/>
<path d="M404.5 215.8c1-1.3 2-1.8 3.5-1.8s2.5.5 3.3 1.8c-.8 1.2-2 1.8-3.3 1.8s-2.5-.6-3.5-1.8z" fill="#1a1a1a"/><circle cx="407.5" cy="215.6" r=".7" fill="#ddd"/>
<path d="M412.5 200.5c1.5-.3 3.5-2 5-4.5" fill="none" stroke="#222" stroke-width=".7"/><rect x="413.5" y="212" width="3" height="5" fill="none" stroke="#6f6f6f" stroke-width=".5"/>
<rect x="440.3" y="208" width="7.3" height="8.3" fill="#6a6a6a" rx="1"/><path d="M441.5 209h3.5l1.5 1.5v5h-5z" fill="#fafafa" stroke="#333" stroke-width=".4"/></svg>
<svg style="left:0px;top:0px" width="480" height="200"><path d="M471.5 191l1.5-1.5 1.5 1.5z" fill="#444"/></svg>
</div>
<div class="a" style="left:477.5px;top:0px;width:2.5px;height:540px;background:#747474;"></div>
<div class="a" style="left:480px;top:0px;width:2.5px;height:540px;background:#474747;"></div>
<div class="a" style="left:482.5px;top:0px;width:477.5px;height:540px;background:#535353;"></div>
<div class="a" style="left:482.5px;top:0px;width:477.5px;height:14px;background:#4b4b4b;"></div>
<div class="a" style="left:482.5px;top:13.5px;width:477.5px;height:1px;background:#404040;"></div>
<div class="a" style="left:485.8px;top:2.2px;width:8px;height:8px;background:#001a30;border:.7px solid #2a90d8;border-radius:1px"></div>
<div class="t" style="left:487.2px;top:3.8px;font-size:5.2px;color:#3aa8f0;font-weight:bold;transform:scaleX(.85)">Ps</div>
<div class="t" style="left:502px;top:4.00px;font-size:7px;color:#d2d2d2;transform:scaleX(0.8);">File</div>
<div class="t" style="left:516px;top:4.00px;font-size:7px;color:#d2d2d2;transform:scaleX(0.8);">Edit</div>
<div class="t" style="left:531px;top:4.00px;font-size:7px;color:#d2d2d2;transform:scaleX(0.8);">Image</div>
<div class="t" style="left:552px;top:4.00px;font-size:7px;color:#d2d2d2;transform:scaleX(0.8);">Layer</div>
<div class="t" style="left:569px;top:4.00px;font-size:7px;color:#d2d2d2;transform:scaleX(0.8);">Type</div>
<div class="t" style="left:588.5px;top:4.00px;font-size:7px;color:#d2d2d2;transform:scaleX(0.8);">Select</div>
<div class="t" style="left:608px;top:4.00px;font-size:7px;color:#d2d2d2;transform:scaleX(0.8);">Filter</div>
<div class="t" style="left:626.5px;top:4.00px;font-size:7px;color:#d2d2d2;transform:scaleX(0.8);">3D</div>
<div class="t" style="left:639px;top:4.00px;font-size:7px;color:#d2d2d2;transform:scaleX(0.8);">View</div>
<div class="t" style="left:656.5px;top:4.00px;font-size:7px;color:#d2d2d2;transform:scaleX(0.8);">Window</div>
<div class="t" style="left:682px;top:4.00px;font-size:7px;color:#d2d2d2;transform:scaleX(0.8);">Help</div>
<div class="a" style="left:912px;top:0px;width:12.5px;height:8.5px;background:#4f4f4f;border:1px solid #444;border-top:none"></div>
<div class="a" style="left:925px;top:0px;width:11.5px;height:8.5px;background:#4f4f4f;border:1px solid #444;border-top:none"></div>
<div class="a" style="left:937px;top:0px;width:20px;height:8.5px;background:#4f4f4f;border:1px solid #444;border-top:none"></div>
<div class="a" style="left:916px;top:5.5px;width:5px;height:1px;background:#cfcfcf;"></div>
<div class="a" style="left:928px;top:3px;width:5px;height:3.5px;background:transparent;border:1px solid #cfcfcf"></div>
<svg style="left:0px;top:0px" width="960" height="20"><path d="M944.5 2.5l4 4M948.5 2.5l-4 4" stroke="#d0d0d0" stroke-width=".9"/></svg>
<div class="a" style="left:482.5px;top:14.5px;width:477.5px;height:14.5px;background:#535353;"></div>
<svg style="left:0px;top:0px" width="960" height="40"><g fill="#e8e8e8"><path d="M490 21.5l4.5-4 4.5 4h-1.3v4h-2.2v-2.5h-2v2.5h-2.2v-4z"/></g>
<path d="M505.5 16v11M527 16v11M566 16v11M703 16v11M759 16v11M825 16v11" stroke="#3f3f3f" stroke-width=".8"/>
<path d="M515 20.5l2-2.5.8.6-1.8 2.6z" fill="#e6e6e6"/><path d="M513.3 21.5l1.6-1.3 1.2 1-1.3 1.6c-.6 1.8-2 2.8-4 2.8.2-2 1-3.5 2.5-4.1z" fill="#f0f0f0"/>
<path d="M521 21.5l1.3 1.3 1.3-1.3M544.5 21.5l1.3 1.3 1.3-1.3" fill="none" stroke="#ccc" stroke-width=".7"/>
<circle cx="536" cy="19.5" r="3.8" fill="#f4f4f4"/>
<rect x="552.5" y="17.5" width="8.5" height="8.5" fill="#e8e8e8"/><path d="M553.5 25l7-7" stroke="#333" stroke-width="1"/><rect x="554" y="19" width="3" height="3" fill="#333"/>
<circle cx="694.5" cy="22" r="3.5" fill="none" stroke="#d0d0d0" stroke-width=".8"/><path d="M694 22.5l4.5-4.5" stroke="#d0d0d0" stroke-width="1"/>
<path d="M747 24.5c0-3 2-5 4-5M749 25l5-6" fill="none" stroke="#d0d0d0" stroke-width=".9"/>
<circle cx="817.5" cy="22" r="2.5" fill="none" stroke="#eee" stroke-width="1.4"/><circle cx="817.5" cy="22" r="3.6" fill="none" stroke="#eee" stroke-width="1" stroke-dasharray="1.3 1"/><rect x="820.5" y="25" width=".8" height=".8" fill="#ddd"/>
<circle cx="833" cy="22.5" r="3.5" fill="none" stroke="#bbb" stroke-width=".9"/><path d="M832 23l5-5" stroke="#ddd" stroke-width="1.2"/>
<path d="M844 18.5c2 0 3 1 3.5 2 .5-1 1.5-2 3.5-2v7c-2 0-3-1-3.5-2-.5 1-1.5 2-3.5 2z" fill="none" stroke="#ccc" stroke-width=".8"/>
<circle cx="917" cy="21" r="2.8" fill="none" stroke="#e6e6e6" stroke-width="1"/><path d="M919 23l2.3 2.3" stroke="#e6e6e6" stroke-width="1.1"/>
<rect x="926.5" y="18" width="8" height="7" fill="none" stroke="#ddd" stroke-width=".9"/><rect x="927" y="18.5" width="2" height="6" fill="#999"/>
<path d="M938.5 21.5l1.3 1.3 1.3-1.3" fill="none" stroke="#ccc" stroke-width=".7"/>
<path d="M947 21v4.5h7.5V21M950.7 23v-5.5M948.5 19.5l2.2-2.2 2.2 2.2" fill="none" stroke="#e6e6e6" stroke-width="1"/></svg>
<div class="t" style="left:569px;top:18.65px;font-size:6.3px;color:#c0c0c0;transform:scaleX(0.74);">Mode:</div>
<div class="a" style="left:583px;top:18.8px;width:56px;height:6.5px;background:#3d3d3d;border-radius:1px"></div>
<div class="t" style="left:586px;top:18.85px;font-size:6.3px;color:#d0d0d0;transform:scaleX(0.76);">Normal</div>
<svg style="left:0px;top:0px" width="960" height="30"><path d="M635.5 21.5l1.2 1.2 1.2-1.2" fill="none" stroke="#ccc" stroke-width=".7"/></svg>
<div class="t" style="left:645px;top:18.85px;font-size:6.3px;color:#c0c0c0;transform:scaleX(0.74);">Opacity:</div>
<div class="a" style="left:664px;top:18.8px;width:15.5px;height:6.5px;background:#3d3d3d;"></div>
<div class="a" style="left:680.5px;top:18.8px;width:4.5px;height:6.5px;background:#3d3d3d;"></div>
<div class="t" style="left:665px;top:19.00px;font-size:6px;color:#d8d8d8;transform:scaleX(0.78);">100%</div>
<div class="t" style="left:706.5px;top:18.85px;font-size:6.3px;color:#c0c0c0;transform:scaleX(0.74);">Flow:</div>
<div class="a" style="left:720px;top:18.8px;width:20px;height:6.5px;background:#3d3d3d;"></div>
<div class="a" style="left:741px;top:18.8px;width:4.5px;height:6.5px;background:#3d3d3d;"></div>
<div class="t" style="left:721px;top:19.00px;font-size:6px;color:#d8d8d8;transform:scaleX(0.78);">100%</div>
<div class="t" style="left:763px;top:18.85px;font-size:6.3px;color:#c0c0c0;transform:scaleX(0.74);">Smoothing:</div>
<div class="a" style="left:788px;top:18.8px;width:14px;height:6.5px;background:#3d3d3d;"></div>
<div class="a" style="left:804px;top:18.8px;width:5px;height:6.5px;background:#3d3d3d;"></div>
<div class="t" style="left:789px;top:19.00px;font-size:6px;color:#d8d8d8;transform:scaleX(0.78);">10%</div>
<svg style="left:0px;top:0px" width="960" height="30"><path d="M681.5 21.5l1.2 1.2 1.2-1.2M742 21.5l1.2 1.2 1.2-1.2M805.3 21.5l1.2 1.2 1.2-1.2" fill="none" stroke="#ccc" stroke-width=".7"/></svg>
<div class="t" style="left:530.5px;top:24.30px;font-size:5px;color:#bbb;transform:scaleX(0.8);">70</div>
<div class="a" style="left:482.5px;top:29px;width:315px;height:12.5px;background:#424242;"></div>
<div class="a" style="left:500px;top:29.5px;width:81px;height:12px;background:#535353;"></div>
<div class="t" style="left:504px;top:33.00px;font-size:6.4px;color:#dcdcdc;transform:scaleX(0.75);font-weight:bold;">Untitled-1 @ 100% (RGB/8) *</div>
<svg style="left:0px;top:0px" width="960" height="40"><path d="M573.3 34l3 3M576.3 34l-3 3" stroke="#999" stroke-width=".7"/></svg>
<div class="a" style="left:482.5px;top:29px;width:17px;height:511px;background:#535353;"></div>
<div class="a" style="left:482.5px;top:29px;width:0.8px;height:511px;background:#4a4a4a;"></div>
<div class="a" style="left:482.5px;top:29.5px;width:16px;height:4.5px;background:#3c3c3c;"></div>
<svg style="left:0px;top:0px" width="960" height="40"><path d="M484 30.5l1.2 1.2-1.2 1.2M486 30.5l1.2 1.2-1.2 1.2" fill="none" stroke="#aaa" stroke-width=".5"/><path d="M485 36.5h9" stroke="#666" stroke-width=".6" stroke-dasharray=".8 .6"/></svg>
<div class="a" style="left:483.5px;top:134px;width:14px;height:9px;background:#3a3a3a;"></div>
<svg style="left:0px;top:0px" width="960" height="340"><g fill="none" stroke="#e0e0e0" stroke-width=".9">
<path d="M490.5 43.5v7M487 47h7M489.5 44.5l1-1 1 1M489.5 49.5l1 1 1-1M488 46l-1 1 1 1M493 46l1 1-1 1"/>
<circle cx="490.5" cy="58.5" r="3.2" stroke-dasharray="1.2 .8"/>
<path d="M487.5 67.5c1 1.5 2 1.5 3 .5s3-2 4-1l-1.5 3 .5 3-3-1.5-2 2 .5-3z"/>
<circle cx="489.5" cy="81.5" r="2.8" stroke-dasharray="1 .8"/><path d="M490.5 83l4-5"/>
<path d="M488 88.5v7.5h7.5M486.5 90h7.5v7.5"/>
<rect x="487" y="100.5" width="7" height="7"/><path d="M487 100.5l7 7M494 100.5l-7 7"/>
<path d="M494.5 111l-1.5-1.5-5.5 5.5 1.5 1.5zM488 115l-1.5 3.5"/>
<path d="M486.5 127l6-6 2.5 2.5-6 6z"/><path d="M489 125l2 2"/>
<path d="M486.5 142l1.2-1.5 5.5-6 .8.8-5.5 6z" fill="#e6e6e6" stroke="none"/>
<path d="M490.5 144v3M487 148.5h7v2h-7zM488.5 145.5a2 2 0 0 1 4 0"/>
<path d="M487 161.5l6-6M486.5 158a3 3 0 0 1 3-2.5"/>
<path d="M486.5 174l4-4 4 4-2.5 2.5h-3zM487 176.5h7"/>
<path d="M487 183.5l3.5-3 4 4-3.5 3zM495 186c.8 1 .8 2 0 2.5"/>
<path d="M490.5 191.5c-1.5 2.5-2.5 4-2.5 5a2.5 2.5 0 0 0 5 0c0-1-1-2.5-2.5-5z" fill="#e0e0e0"/>
<circle cx="491.5" cy="205.5" r="2.3"/><path d="M489.8 207.3l-2.5 2.5"/>
<path d="M487 220.5l5-5 2 2-5 5zM487 220.5l-1 2.5 2.5-1"/>
</g>
<text x="486" y="233" font-family="Liberation Serif" font-size="9.5" fill="#e6e6e6">T</text>
<g fill="none" stroke="#e0e0e0" stroke-width=".9">
<path d="M487.5 236v8l2-2 1.5 3 1-.5-1.5-3h3z" fill="#e0e0e0"/>
<path d="M487 255.5l7-7"/>
<path d="M488 261c0-1.5 1-2.5 2-2.5s1 1 1 1 .5-1.5 1.5-1 1 1 1 2.5v2a3 3 0 0 1-6 0z"/>
<circle cx="490" cy="273.5" r="2.7"/><path d="M492 275.5l2.5 2.5"/>
</g>
<g fill="#e0e0e0"><circle cx="487.5" cy="286" r=".7"/><circle cx="490.5" cy="286" r=".7"/><circle cx="493.5" cy="286" r=".7"/></g>
<rect x="485" y="295" width="3" height="3" fill="#111" stroke="#eee" stroke-width=".5"/><rect x="483.5" y="294" width="3" height="3" fill="#eee"/>
<path d="M492.5 294.5h2.5v2.5M494 297.5h-2.5v-2" fill="none" stroke="#ccc" stroke-width=".6"/>
<rect x="488.5" y="306" width="7" height="7" fill="#1f4e9e" stroke="#d8d8d8" stroke-width=".8"/>
<rect x="484" y="301.5" width="7" height="7" fill="#8aff12" stroke="#d8d8d8" stroke-width=".6"/>
<rect x="486.5" y="319.5" width="8" height="5.5" fill="none" stroke="#ccc" stroke-width=".7"/><circle cx="490.5" cy="322.2" r="1.5" fill="none" stroke="#ccc" stroke-width=".6"/>
<rect x="486.5" y="330.5" width="8" height="5" fill="none" stroke="#ccc" stroke-width=".7"/><rect x="488" y="329" width="6" height="4" fill="none" stroke="#ccc" stroke-width=".6"/>
<g fill="#bbb"><rect x="495" y="51" width=".7" height=".7"/><rect x="495" y="62.5" width=".7" height=".7"/><rect x="495" y="74" width=".7" height=".7"/><rect x="495" y="85.5" width=".7" height=".7"/><rect x="495" y="97" width=".7" height=".7"/><rect x="495" y="131" width=".7" height=".7"/><rect x="495" y="142" width=".7" height=".7"/><rect x="495" y="153" width=".7" height=".7"/><rect x="495" y="165" width=".7" height=".7"/><rect x="495" y="176" width=".7" height=".7"/><rect x="495" y="187" width=".7" height=".7"/><rect x="495" y="199" width=".7" height=".7"/><rect x="495" y="210" width=".7" height=".7"/><rect x="495" y="222" width=".7" height=".7"/><rect x="495" y="233" width=".7" height=".7"/><rect x="495" y="244" width=".7" height=".7"/><rect x="495" y="256" width=".7" height=".7"/><rect x="495" y="267" width=".7" height=".7"/><rect x="495" y="289" width=".7" height=".7"/><rect x="495" y="336" width=".7" height=".7"/></g></svg>
<div class="a" style="left:499px;top:41.5px;width:291px;height:489px;background:#282828;"></div>
<div class="a" style="left:519px;top:161px;width:251px;height:250px;background:#8aff12;"></div>
<div class="a" style="left:790px;top:41.5px;width:7.5px;height:495.5px;background:#474747;"></div>
<div class="a" style="left:499px;top:530px;width:291px;height:7px;background:#474747;"></div>
<div class="a" style="left:499px;top:530px;width:21.5px;height:7px;background:#3c3c3c;"></div>
<div class="t" style="left:504px;top:530.75px;font-size:5.5px;color:#c8c8c8;transform:scaleX(0.8);">100%</div>
<div class="t" style="left:541px;top:530.75px;font-size:5.5px;color:#c8c8c8;transform:scaleX(0.8);">Doc: 2.86M/1.91M</div>
<svg style="left:0px;top:0px" width="960" height="540"><path d="M596 532l1.3 1.5-1.3 1.5" fill="none" stroke="#ccc" stroke-width=".7"/></svg>
<div class="a" style="left:482px;top:537px;width:478px;height:3px;background:#3c3c3c;"></div>
<div class="a" style="left:797.5px;top:29px;width:162.5px;height:5px;background:#3c3c3c;"></div>
<svg style="left:0px;top:0px" width="960" height="40"><path d="M811 30.3l-1.2 1.2 1.2 1.2M812.5 30.3l-1.2 1.2 1.2 1.2M935 30.3l1.2 1.2-1.2 1.2M936.5 30.3l1.2 1.2-1.2 1.2M953 30.3l-1.2 1.2 1.2 1.2M954.5 30.3l-1.2 1.2 1.2 1.2" fill="none" stroke="#aaa" stroke-width=".5"/></svg>
<div class="a" style="left:797.5px;top:34px;width:1px;height:503px;background:#3a3a3a;"></div>
<div class="a" style="left:798.5px;top:34px;width:16px;height:503px;background:#535353;"></div>
<div class="a" style="left:814.5px;top:34px;width:1px;height:503px;background:#3a3a3a;"></div>
<div class="a" style="left:940px;top:34px;width:1px;height:503px;background:#3a3a3a;"></div>
<div class="a" style="left:941px;top:34px;width:16.5px;height:503px;background:#535353;"></div>
<div class="a" style="left:957.5px;top:0px;width:2.5px;height:540px;background:#3a3a3a;"></div>
<div class="a" style="left:798.5px;top:51.5px;width:16px;height:1px;background:#444;"></div>
<div class="a" style="left:941px;top:51.5px;width:16.5px;height:1px;background:#444;"></div>
<div class="a" style="left:941px;top:68.5px;width:16.5px;height:1.5px;background:#444;"></div>
<div class="a" style="left:941px;top:70px;width:16.5px;height:467px;background:#535353;"></div>
<svg style="left:0px;top:0px" width="960" height="80"><path d="M800.5 35.8h13M943 35.8h13" stroke="#666" stroke-width=".5" stroke-dasharray=".8 .6"/>
<rect x="803" y="41" width="2.3" height="8" rx=".8" fill="none" stroke="#e0e0e0" stroke-width=".7"/><path d="M807.5 41.5c2 .5 2.5 3 .5 5M807 45.5l1 1.2 1.3-.8" fill="none" stroke="#e0e0e0" stroke-width=".7"/>
<path d="M947.2 45a2.8 2.8 0 1 1 4.6 0c-.5.9-.9 1.4-.9 2.3h-2.8c0-.9-.4-1.4-.9-2.3z" fill="none" stroke="#e6e6e6" stroke-width=".7"/><rect x="948.3" y="47.3" width="2.4" height="1.8" fill="#f4f4f4"/>
<ellipse cx="949.2" cy="62.5" rx="4.8" ry="3.3" fill="#c4c4c4"/><path d="M946.5 63.5c1-2 2.5-2.2 3.5-1s2.2 1.2 3-.5M947.5 61.2c1.5-1 3.5-1 5 .3" fill="none" stroke="#555" stroke-width=".7"/></svg>
<div class="a" style="left:815.5px;top:34px;width:124.5px;height:13px;background:#424242;"></div>
<div class="a" style="left:815.5px;top:34px;width:29px;height:13px;background:#535353;"></div>
<div class="a" style="left:844.5px;top:34px;width:30px;height:13px;background:#474747;"></div>
<div class="t" style="left:819.3px;top:37.80px;font-size:6.4px;color:#f0f0f0;transform:scaleX(0.72);font-weight:bold;">Navigator</div>
<div class="t" style="left:848.3px;top:37.80px;font-size:6.4px;color:#a8a8a8;transform:scaleX(0.74);">Histogram</div>
<svg style="left:0px;top:0px" width="960" height="50"><path d="M933 38.5h4.5M933 40h4.5M933 41.5h4.5" stroke="#999" stroke-width=".8"/></svg>
<div class="a" style="left:815.5px;top:47px;width:124.5px;height:437.5px;background:#535353;"></div>
<div class="a" style="left:817px;top:205.3px;width:120px;height:119.7px;background:#0dfb3b;border:1px solid #c05858"></div>
<div class="a" style="left:815.5px;top:484.5px;width:124.5px;height:10.5px;background:#4b4b4b;"></div>
<div class="a" style="left:815.5px;top:484.5px;width:24.5px;height:10.5px;background:#454545;"></div>
<div class="t" style="left:817.5px;top:487.25px;font-size:5.5px;color:#d0d0d0;transform:scaleX(0.8);">100%</div>
<svg style="left:0px;top:0px" width="960" height="500"><path d="M843.5 490.8h3.5l-1.7-1.8z" fill="#e6e6e6"/><rect x="853.5" y="488.5" width="64" height="1.1" fill="#7a7a7a"/>
<path d="M882.7 492.3h4.5l-2.2-3z" fill="#fafafa"/><path d="M921.5 491h6l-1.5-2-1 1-1-1.5z" fill="#eee"/></svg>
<div class="a" style="left:815.5px;top:495px;width:124.5px;height:14px;background:#3a3a3a;"></div>
<div class="a" style="left:815.5px;top:496px;width:124.5px;height:13px;background:#424242;"></div>
<div class="a" style="left:816px;top:496px;width:19px;height:13px;background:#535353;"></div>
<div class="t" style="left:819.5px;top:499.40px;font-size:6.4px;color:#f0f0f0;transform:scaleX(0.72);font-weight:bold;">Color</div>
<div class="a" style="left:835.5px;top:496px;width:27.5px;height:13px;background:#474747;"></div>
<div class="t" style="left:839.0px;top:499.40px;font-size:6.4px;color:#a8a8a8;transform:scaleX(0.76);">Swatches</div>
<svg style="left:0px;top:0px" width="960" height="540"><path d="M933 500.8h4.5M933 502.3h4.5M933 503.8h4.5" stroke="#999" stroke-width=".8"/></svg>
<div class="a" style="left:815.5px;top:509px;width:124.5px;height:14px;background:#3a3a3a;"></div>
<div class="a" style="left:815.5px;top:510px;width:124.5px;height:13px;background:#424242;"></div>
<div class="a" style="left:816px;top:510px;width:29.5px;height:13px;background:#535353;"></div>
<div class="t" style="left:819.5px;top:513.40px;font-size:6.4px;color:#f0f0f0;transform:scaleX(0.72);font-weight:bold;">Properties</div>
<div class="a" style="left:846px;top:510px;width:33px;height:13px;background:#474747;"></div>
<div class="t" style="left:849.5px;top:513.40px;font-size:6.4px;color:#a8a8a8;transform:scaleX(0.76);">Adjustments</div>
<svg style="left:0px;top:0px" width="960" height="540"><path d="M933 514.8h4.5M933 516.3h4.5M933 517.8h4.5" stroke="#999" stroke-width=".8"/></svg>
<div class="a" style="left:815.5px;top:523px;width:124.5px;height:14px;background:#3a3a3a;"></div>
<div class="a" style="left:815.5px;top:524px;width:124.5px;height:13px;background:#424242;"></div>
<div class="a" style="left:816px;top:524px;width:20px;height:13px;background:#535353;"></div>
<div class="t" style="left:819.5px;top:527.40px;font-size:6.4px;color:#f0f0f0;transform:scaleX(0.72);font-weight:bold;">Layers</div>
<div class="a" style="left:836.5px;top:524px;width:27.0px;height:13px;background:#474747;"></div>
<div class="t" style="left:840.0px;top:527.40px;font-size:6.4px;color:#a8a8a8;transform:scaleX(0.76);">Channels</div>
<div class="a" style="left:864px;top:524px;width:20px;height:13px;background:#474747;"></div>
<div class="t" style="left:867.5px;top:527.40px;font-size:6.4px;color:#a8a8a8;transform:scaleX(0.76);">Paths</div>
<svg style="left:0px;top:0px" width="960" height="540"><path d="M933 528.8h4.5M933 530.3h4.5M933 531.8h4.5" stroke="#999" stroke-width=".8"/></svg>
<div class="t" style="left:408px;top:477px;font-size:11.8px;line-height:14px;color:#fff">Wacom Cintiq Screen</div>
</body></html>
